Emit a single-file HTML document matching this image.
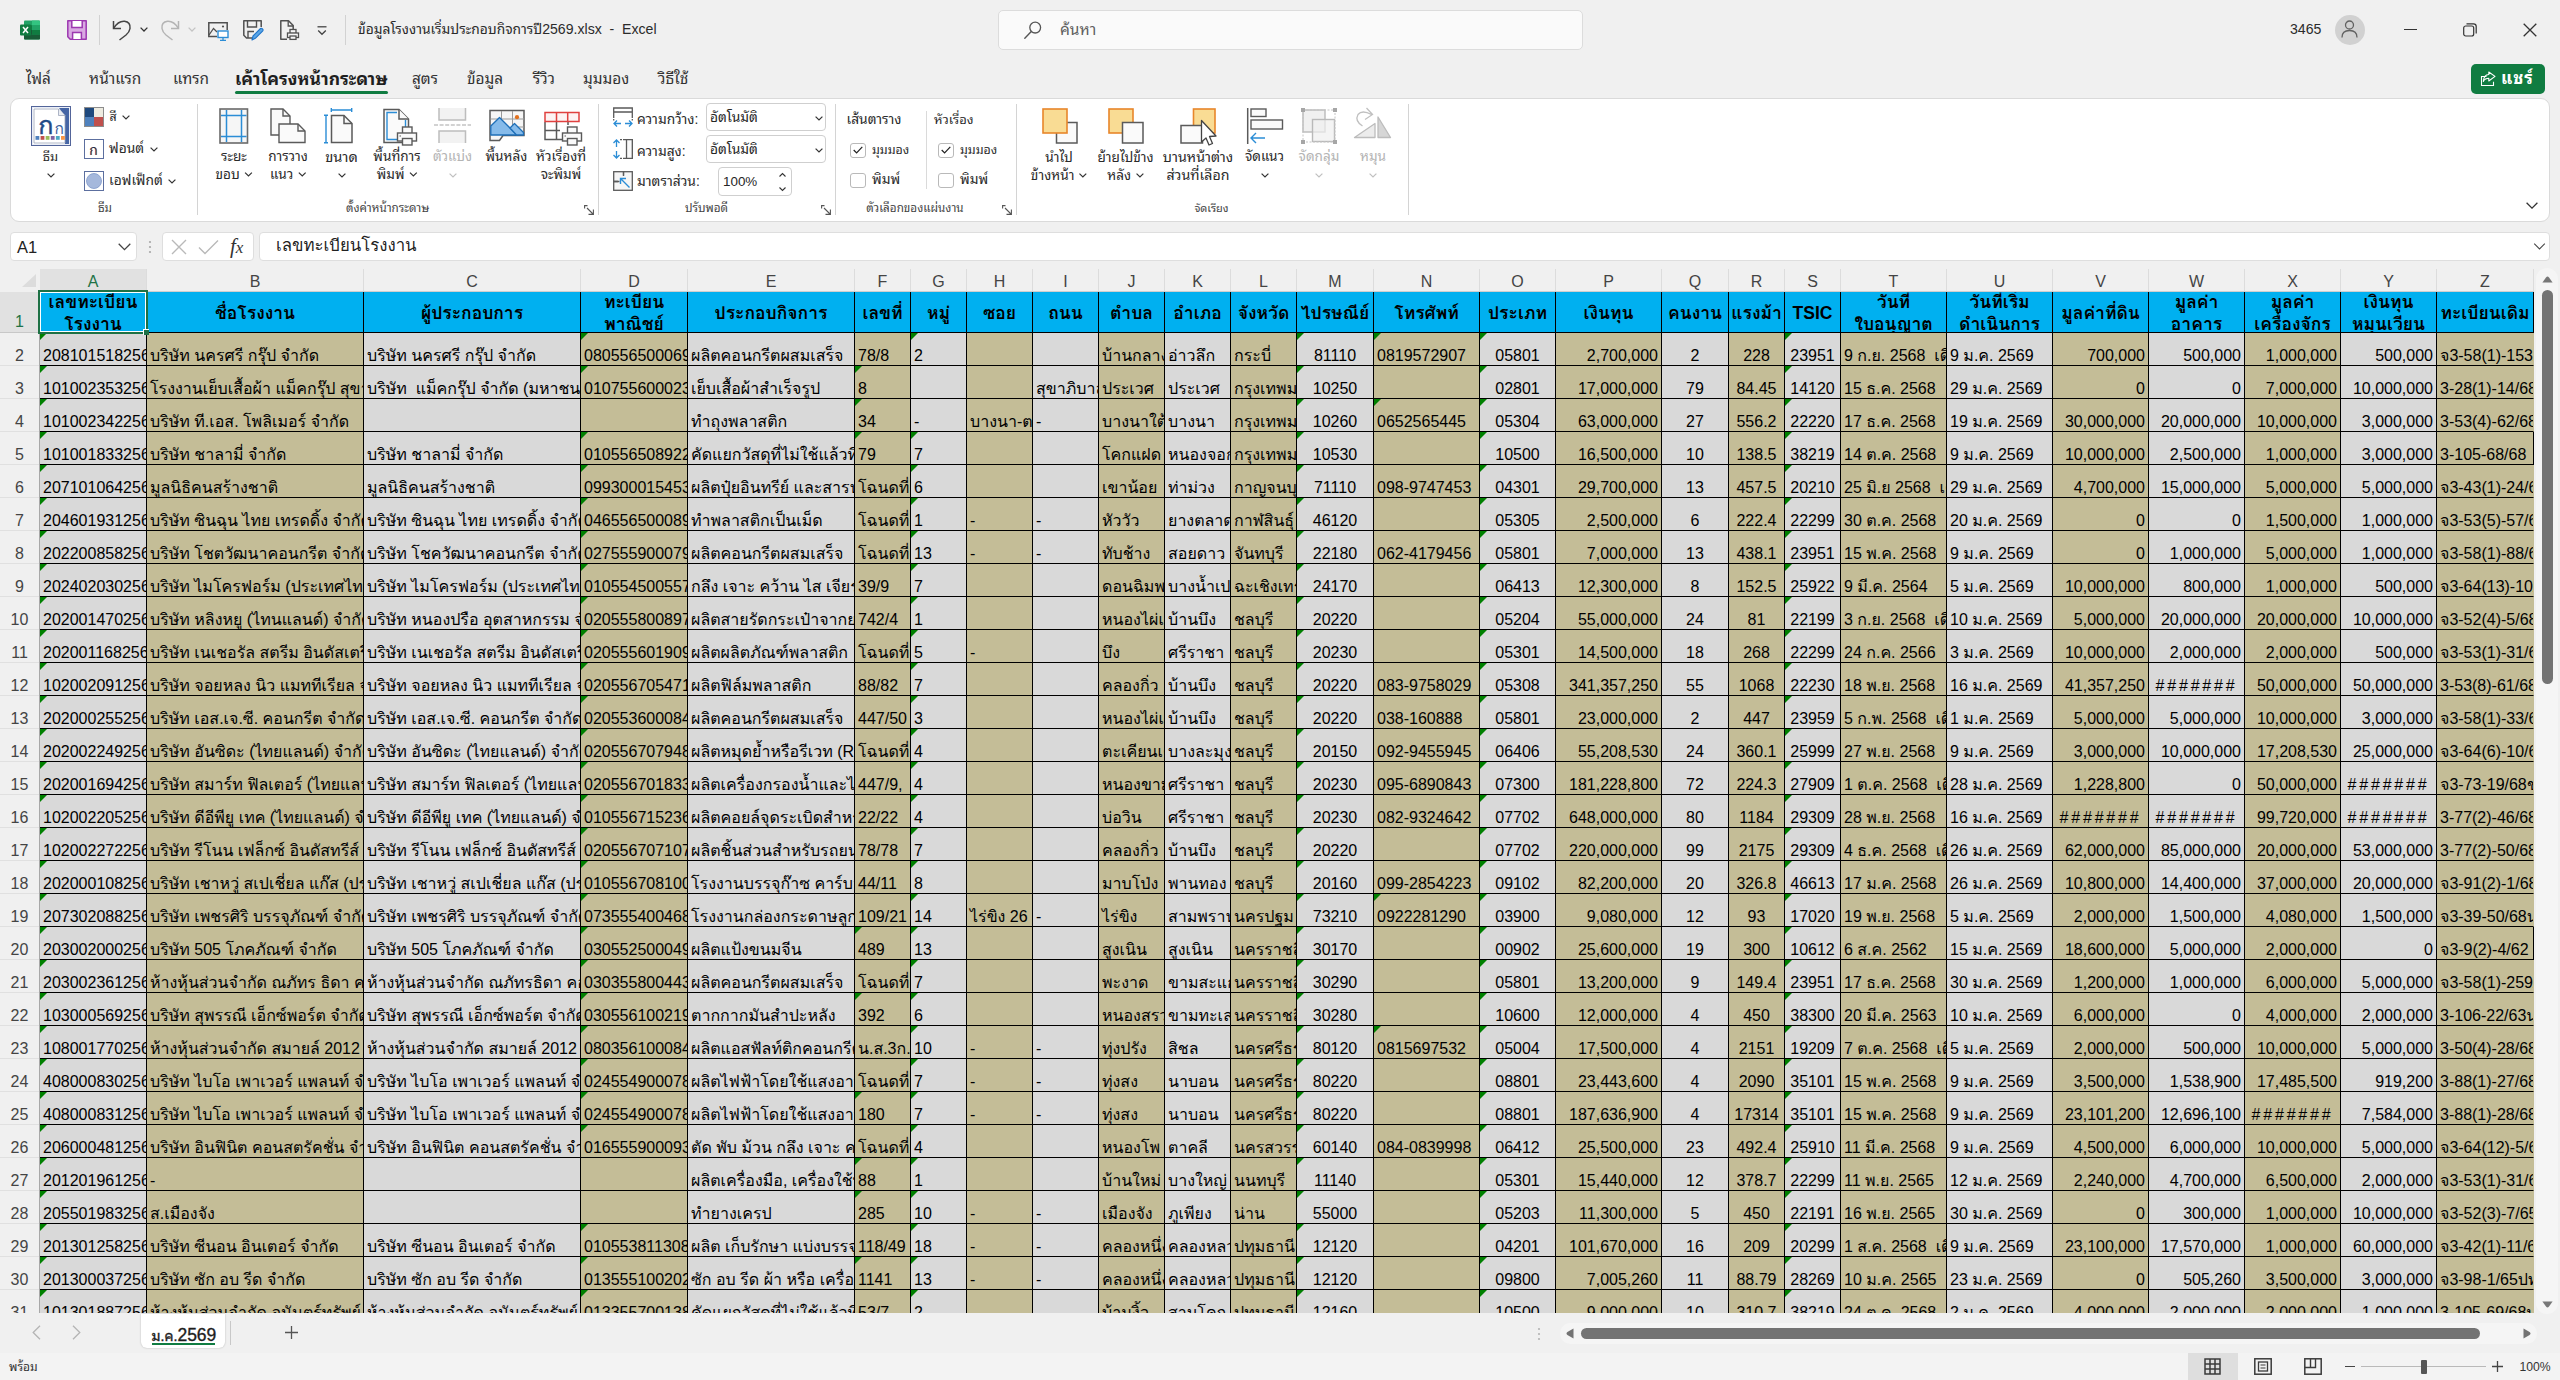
<!DOCTYPE html>
<html lang="th">
<head>
<meta charset="utf-8">
<title>ข้อมูลโรงงานเริ่มประกอบกิจการปี2569.xlsx - Excel</title>
<style>
html,body{margin:0;padding:0}
body{width:2560px;height:1380px;overflow:hidden;background:#f0f0f0;position:relative;
 font-family:"Liberation Sans","Noto Sans Thai Looped","Leelawadee UI","Noto Sans Thai","Sarabun","Loma","Garuda","Tahoma","DejaVu Sans",sans-serif;color:#262626;font-size:15px}
.cf{font-family:"Liberation Sans","Loma","Tahoma","Garuda","Noto Sans Thai Looped","Noto Sans Thai","Sarabun","DejaVu Sans",sans-serif}
.abs{position:absolute}
svg{position:absolute;overflow:visible}
.tx{position:absolute;white-space:nowrap;line-height:20px}
/* ---------- title bar ---------- */
#title{left:358px;top:19px;font-size:13.8px;color:#2b2b2b}
#title b{font-weight:normal;font-size:14.1px}
#search{left:998px;top:10px;width:583px;height:38px;background:#fafafa;border:1px solid #dcdcdc;border-radius:5px}
#search .tx{left:61px;top:9px;font-size:15.5px;color:#5f5f5f}
.vsep{position:absolute;width:1px;background:#d2d2d2}
/* ---------- tabs ---------- */
.tab{position:absolute;top:67px;margin-left:1px;font-size:15.4px;line-height:24px;white-space:nowrap;color:#333}
.tab.act{font-weight:bold;color:#1f1f1f;font-size:17.5px;margin-left:0;top:66.5px}
#share{left:2471px;top:64px;width:74px;height:30px;background:#107c41;border-radius:5px}
#share .tx{left:30px;top:5px;color:#fff;font-weight:bold;font-size:17px;letter-spacing:1px}
/* ---------- ribbon ---------- */
#ribbon{left:10px;top:98px;width:2540px;height:124px;background:#fff;border:1px solid #dadada;border-radius:9px;box-sizing:border-box}
.rl{position:absolute;white-space:nowrap;font-size:13.6px;line-height:18px;color:#2b2b2b;text-align:center;transform:translateX(-50%)}
.rl.dis{color:#b4b4b4}
.rs{position:absolute;white-space:nowrap;font-size:13.8px;line-height:18px;color:#2b2b2b}
.gl{position:absolute;top:199px;white-space:nowrap;font-size:11.7px;line-height:18px;color:#444;transform:translateX(-50%)}
.gsep{position:absolute;top:104px;width:1px;height:111px;background:#d4d4d4}
.combo{position:absolute;height:28px;border:1px solid #cfcfcf;border-radius:4px;background:#fff;box-sizing:border-box}
.combo .tx{left:3px;top:5px;font-size:13.8px;line-height:18px}
.rl svg.ic{position:static;display:inline-block;vertical-align:2px;margin-left:1px}
.cb{position:absolute;width:15.5px;height:15.5px;border:1px solid #b9b9b9;border-radius:3px;box-sizing:border-box;background:#fff}
/* ---------- formula bar ---------- */
.fbox{position:absolute;top:232px;height:29px;background:#fff;border:1px solid #dedede;border-radius:4px;box-sizing:border-box}
/* ---------- grid ---------- */
#corner{left:0;top:269px;width:39px;height:22px}
#colhdr{position:absolute;left:40px;top:269px;width:2494px;height:22px;overflow:hidden;border-bottom:1px solid #cfcfcf;font-size:16px;color:#444}
#colhdr div{position:absolute;top:0;height:22px;line-height:26px;text-align:center;box-sizing:border-box;border-right:1px solid #dcdcdc}
#colhdr div.sel{background:#e1e1e1;color:#217346}
#rowhdr{position:absolute;left:0;top:292px;width:39px;height:1021px;overflow:hidden;font-size:16px;color:#444;border-right:1px solid #a8a8a8}
#rowhdr div{position:absolute;left:0;width:39px;height:33px;line-height:45px;text-align:center;box-sizing:border-box;border-bottom:1px solid #e0e0e0}
#rowhdr div.sel{background:#e1e1e1;color:#217346;border-bottom-color:#c8c8c8}
#grid{position:absolute;left:40px;top:292px;width:2494px;height:1021px;overflow:hidden;font-size:16px;color:#000;white-space:nowrap;background:#d9d9d9}
#grid .r,#grid .hr{display:flex;height:33px;width:2600px}
#grid .hr{height:41px}
#grid .r>div{flex:none;box-sizing:border-box;height:33px;line-height:45px;padding:0 3px;border-right:1px solid #000;border-bottom:1px solid #000;overflow:hidden;position:relative;white-space:pre}
#grid .hr>div{flex:none;box-sizing:border-box;height:41px;border-right:1px solid #000;border-bottom:1px solid #000;overflow:hidden;background:#00b0f0;font-weight:bold;text-align:center;display:flex;align-items:center;justify-content:center;line-height:21.5px;padding-top:3px;font-size:17.5px}
#grid .g{background:#d9d9d9}
#grid .t{background:#c4bd97}
#grid .ac{text-align:center}
#grid .ar{text-align:right}
#grid .r>.nb{border-right-color:transparent}
#grid .hs{letter-spacing:2.8px;padding-left:5px}
#grid .e::before{content:"";position:absolute;left:0;top:0;border-top:7px solid #008000;border-right:7px solid transparent}
#selbox{left:38px;top:290px;width:110px;height:44px;border:2px solid #1e7145;box-sizing:border-box;box-shadow:inset 0 0 0 1px #fff}
#selhandle{left:143px;top:329px;width:5px;height:5px;background:#1e7145;border-left:1px solid #fff;border-top:1px solid #fff}
/* ---------- bottom ---------- */
#sheettab{left:141px;top:1314px;width:84px;height:34px;background:#fff;border-radius:0 0 6px 6px;box-shadow:0 0 2px rgba(0,0,0,.25)}
#status{left:0;top:1353px;width:2560px;height:27px;background:#f3f3f3}
</style>
</head>
<body>
<!-- ======= TITLE BAR ======= -->
<!-- Excel logo -->
<svg style="left:20px;top:20px" width="20" height="20" viewBox="0 0 20 20"><path d="M5 0.5H19Q20 0.5 20 1.5V18.5Q20 19.5 19 19.5H5Q4 19.5 4 18.5V1.5Q4 0.5 5 0.5Z" fill="#21a366"/><path d="M12 0.5H19Q20 0.5 20 1.5V5.2H12Z" fill="#33c481"/><path d="M4 5.2H12V10H4Z" fill="#107c41"/><path d="M12 5.2H20V10H12Z" fill="#21a366"/><path d="M4 10H12V14.8H4Z" fill="#185c37"/><path d="M12 10H20V14.8H12Z" fill="#107c41"/><path d="M4 14.8H20V18.5Q20 19.5 19 19.5H5Q4 19.5 4 18.5Z" fill="#185c37"/><rect x="0" y="4.5" width="11" height="11" rx="1" fill="#107c41"/><path d="M3 7L8 13M8 7L3 13" stroke="#fff" stroke-width="1.5"/></svg>
<!-- Save (purple) -->
<svg style="left:67px;top:20px" width="20" height="20" viewBox="0 0 20 20"><path d="M0.8 0.8H19.2V19.2H3.2L0.8 16.8Z" fill="#d9a9e2" stroke="#9c37b0" stroke-width="1.5" stroke-linejoin="round"/><path d="M4.8 1V7.6H15.2V1" fill="#fff" stroke="#9c37b0" stroke-width="1.5"/><path d="M5.6 19V12.4H14.4V19" fill="#fff" stroke="#9c37b0" stroke-width="1.5"/></svg>
<div class="vsep" style="left:99px;top:15px;height:30px"></div>
<!-- Undo -->
<svg style="left:112px;top:19px" width="20" height="22" viewBox="0 0 20 22"><path d="M1.5 2V9.5H9" fill="none" stroke="#444" stroke-width="1.5"/><path d="M1.8 9.2Q6 1.8 12.5 2.2Q18.8 3 18 9.5Q17.5 13 14 16L7.5 21" fill="none" stroke="#444" stroke-width="1.5"/></svg>
<svg style="left:140px;top:27px" width="8" height="5" viewBox="0 0 8 5"><path d="M0.6 0.6L4 4L7.4 0.6" fill="none" stroke="#333" stroke-width="1.3"/></svg>
<!-- Redo (disabled) -->
<svg style="left:160px;top:19px" width="20" height="22" viewBox="0 0 20 22"><path d="M18.5 2V9.5H11" fill="none" stroke="#b4b4b4" stroke-width="1.5"/><path d="M18.2 9.2Q14 1.8 7.5 2.2Q1.2 3 2 9.5Q2.5 13 6 16L12.5 21" fill="none" stroke="#b4b4b4" stroke-width="1.5"/></svg>
<svg style="left:188px;top:27px" width="8" height="5" viewBox="0 0 8 5"><path d="M0.6 0.6L4 4L7.4 0.6" fill="none" stroke="#c4c4c4" stroke-width="1.3"/></svg>
<!-- picture / screen -->
<svg style="left:208px;top:22px" width="21" height="19" viewBox="0 0 21 19"><path d="M9 14.5H0.8V0.8H19.2V8" fill="none" stroke="#505050" stroke-width="1.5"/><path d="M1 13L5.5 6.5L9 10" fill="none" stroke="#505050" stroke-width="1.3"/><circle cx="15" cy="4.5" r="1.1" fill="#505050"/><rect x="10" y="9" width="10" height="6.5" fill="#fff" stroke="#2b8dd6" stroke-width="1.4"/><path d="M15 15.5V18M12 18.3H18" stroke="#2b8dd6" stroke-width="1.3"/></svg>
<!-- save + pencil -->
<svg style="left:243px;top:20px" width="21" height="21" viewBox="0 0 21 21"><path d="M10 18H3.5L0.8 15.3V0.8H18.2V7" fill="none" stroke="#505050" stroke-width="1.5" stroke-linejoin="round"/><path d="M4.5 1V7H13.5V1" fill="none" stroke="#505050" stroke-width="1.4"/><path d="M5 18V11.5H11" fill="none" stroke="#505050" stroke-width="1.4"/><path d="M9 20L10 16L17.5 8.5Q18.5 7.8 19.5 8.8Q20.5 9.8 19.8 10.8L12.3 18.3Z" fill="#5aa5e6" stroke="#1f74c9" stroke-width="1.1" stroke-linejoin="round"/></svg>
<!-- print preview -->
<svg style="left:280px;top:20px" width="19" height="20" viewBox="0 0 19 20"><path d="M7 19.2H0.8V0.8H8.5L13.2 5.5V9" fill="none" stroke="#505050" stroke-width="1.5" stroke-linejoin="round"/><path d="M8.2 1V6H13" fill="none" stroke="#505050" stroke-width="1.3"/><g fill="#f6f6f6" stroke="#505050" stroke-width="1.3"><rect x="10" y="9.5" width="6" height="4"/><rect x="7.5" y="13" width="11" height="4.5"/><rect x="10" y="16" width="6" height="3.4"/></g></svg>
<!-- customize -->
<svg style="left:317px;top:26px" width="10" height="10" viewBox="0 0 10 10"><path d="M0.5 0.8H9.5" stroke="#444" stroke-width="1.3"/><path d="M1.2 4.5L5 8.3L8.8 4.5" fill="none" stroke="#444" stroke-width="1.3"/></svg>
<div class="vsep" style="left:345px;top:15px;height:30px"></div>

<div class="tx" id="title">ข้อมูลโรงงานเริ่มประกอบกิจการปี<b>2569.xlsx&nbsp; -&nbsp; Excel</b></div>
<div class="abs" id="search"><div class="tx">ค้นหา</div>
<svg style="left:24px;top:9px" width="20" height="20" viewBox="0 0 20 20"><circle cx="12.2" cy="7.6" r="5.4" fill="none" stroke="#555" stroke-width="1.3"/><path d="M8.3 11.6 L1.8 18.2" stroke="#555" stroke-width="1.4" stroke-linecap="round"/></svg>
</div>
<div class="tx" style="left:2290px;top:19px;font-size:14.1px;color:#2b2b2b">3465</div>
<div class="abs" style="left:2334.5px;top:14.5px;width:30px;height:30px;border-radius:50%;background:#d1d1d1"></div>
<svg style="left:2341px;top:20px" width="17" height="18" viewBox="0 0 17 18"><circle cx="8.5" cy="5" r="4" fill="none" stroke="#616161" stroke-width="1.3"/><path d="M1 17.5Q1 10.5 8.5 10.5Q16 10.5 16 17.5" fill="none" stroke="#616161" stroke-width="1.3"/></svg>
<div class="abs" style="left:2404px;top:29px;width:13px;height:1.3px;background:#333"></div>
<svg style="left:2463px;top:23px" width="14" height="14" viewBox="0 0 14 14"><rect x="0.7" y="3" width="10" height="10" rx="2" fill="none" stroke="#333" stroke-width="1.2"/><path d="M3.5 0.8H10.5Q13.2 0.8 13.2 3.5V10.5" fill="none" stroke="#333" stroke-width="1.2"/></svg>
<svg style="left:2523px;top:23px" width="14" height="14" viewBox="0 0 14 14"><path d="M0.7 0.7L13.3 13.3M13.3 0.7L0.7 13.3" stroke="#333" stroke-width="1.3"/></svg>

<!-- ======= TABS ======= -->
<div class="tab" style="left:25px">ไฟล์</div>
<div class="tab" style="left:88px">หน้าแรก</div>
<div class="tab" style="left:172px">แทรก</div>
<div class="tab act" style="left:235px">เค้าโครงหน้ากระดาษ</div>
<div class="abs" style="left:235px;top:91px;width:153px;height:3px;background:#107c41;border-radius:2px"></div>
<div class="tab" style="left:411px">สูตร</div>
<div class="tab" style="left:466px">ข้อมูล</div>
<div class="tab" style="left:532px">รีวิว</div>
<div class="tab" style="left:582px">มุมมอง</div>
<div class="tab" style="left:657px">วิธีใช้</div>
<div class="abs" id="share"><div class="tx">แชร์</div>
<svg style="left:9px;top:7px" width="17" height="16" viewBox="0 0 17 16"><path d="M6.5 5.5H1.5V14.5H13.5V10.8" fill="none" stroke="#fff" stroke-width="1.1"/><path d="M8.8 1L15 5.4L8.8 10V7.3Q5 7.3 3.3 10.4Q3.8 3.8 8.8 3.5Z" fill="none" stroke="#fff" stroke-width="1.1" stroke-linejoin="round"/></svg>
</div>
<!-- ======= RIBBON ======= -->
<div class="abs" id="ribbon"></div>
<!-- === Themes group === -->
<div class="abs" style="left:31px;top:106px;width:40px;height:40px;box-sizing:border-box;border:1px solid #53659a;background:#eaeef7"></div>
<svg style="left:33px;top:108px" width="36" height="36" viewBox="0 0 36 36"><rect x="0" y="0" width="36" height="36" fill="#fff"/><path d="M26 0H36V36H32V8Z" fill="#4565a5"/><path d="M1 1H25.5L32 7.5V35H1Z" fill="#fff" stroke="#9aa3b8" stroke-width="0.8"/><path d="M25.5 1V7.5H32" fill="#e9ecf2" stroke="#9aa3b8" stroke-width="0.8"/><rect x="2.5" y="28" width="3.8" height="3.8" fill="#4f81bd"/><rect x="7.6" y="28" width="3.8" height="3.8" fill="#c0504d"/><rect x="12.7" y="28" width="3.8" height="3.8" fill="#9bbb59"/><rect x="17.8" y="28" width="3.8" height="3.8" fill="#8064a2"/><rect x="22.9" y="28" width="3.8" height="3.8" fill="#4bacc6"/><rect x="28" y="28" width="3.8" height="3.8" fill="#f79646"/><text x="5.2" y="25.6" font-size="25" font-family="Liberation Sans,Loma,sans-serif" fill="#1f4b87" stroke="#1f4b87" stroke-width="0.5">ก</text><text x="21.6" y="25.6" font-size="15.5" font-family="Liberation Sans,Loma,sans-serif" fill="#3a62a0">ก</text></svg>
<div class="rl" style="left:50.5px;top:148px;font-size:12.8px">ธีม</div>
<svg class="car" style="left:47px;top:173px" width="8" height="5" viewBox="0 0 8 5"><path d="M0.6 0.6L4 4L7.4 0.6" fill="none" stroke="#333" stroke-width="1.2"/></svg>
<svg style="left:84px;top:107px" width="20" height="20" viewBox="0 0 20 20"><rect x="0.5" y="0.5" width="19" height="19" fill="#eeece1" stroke="#8c8c8c"/><rect x="1" y="1" width="9" height="9" fill="#1f497d"/><rect x="1" y="10" width="9" height="9" fill="#4f81bd"/><rect x="10" y="10" width="9" height="9" fill="#c0504d"/></svg>
<div class="rs" style="left:109.4px;top:108px;font-size:12.5px">สี</div>
<svg class="car" style="left:122px;top:115px" width="8" height="5" viewBox="0 0 8 5"><path d="M0.6 0.6L4 4L7.4 0.6" fill="none" stroke="#333" stroke-width="1.2"/></svg>
<svg style="left:84px;top:139px" width="20" height="20" viewBox="0 0 20 20"><rect x="0.5" y="0.5" width="19" height="19" fill="#fff" stroke="#5c6f9f"/><text x="5.6" y="16" font-size="14" font-family="Liberation Sans,Loma,sans-serif" fill="#e8902e">ก</text><text x="5" y="15.6" font-size="14" font-family="Liberation Sans,Loma,sans-serif" fill="#1c2f5e">ก</text></svg>
<div class="rs" style="left:109px;top:140px">ฟอนต์</div>
<svg class="car" style="left:150px;top:147px" width="8" height="5" viewBox="0 0 8 5"><path d="M0.6 0.6L4 4L7.4 0.6" fill="none" stroke="#333" stroke-width="1.2"/></svg>
<svg style="left:84px;top:171px" width="20" height="20" viewBox="0 0 20 20"><rect x="0.5" y="0.5" width="19" height="19" fill="#fff" stroke="#5c6f9f"/><circle cx="10" cy="10" r="7.5" fill="#a5b8dc" stroke="#7f98c9" stroke-width="0.8"/></svg>
<div class="rs" style="left:109px;top:172px">เอฟเฟ็กต์</div>
<svg class="car" style="left:168px;top:179px" width="8" height="5" viewBox="0 0 8 5"><path d="M0.6 0.6L4 4L7.4 0.6" fill="none" stroke="#333" stroke-width="1.2"/></svg>
<div class="gl" style="left:105px">ธีม</div>
<div class="gsep" style="left:197px"></div>
<!-- === Page Setup group === -->
<svg style="left:219px;top:108px" width="30" height="36" viewBox="0 0 30 36"><rect x="1" y="1" width="27.5" height="34" fill="#f6f6f6" stroke="#6a6a6a" stroke-width="1.6"/><path d="M7.5 2V34M22.5 2V34M2 7.5H27.5M2 28.5H27.5" stroke="#2b8dd6" stroke-width="1.5" fill="none"/></svg>
<div class="rl" style="left:234px;top:148px">ระยะ<br>ขอบ <svg class="ic" width="8" height="5" viewBox="0 0 8 5"><path d="M0.6 0.6L4 4L7.4 0.6" fill="none" stroke="#333" stroke-width="1.2"/></svg></div>
<svg style="left:270px;top:108px" width="36" height="36" viewBox="0 0 36 36"><path d="M1 1H13L20 8V27H1Z" fill="#fafafa" stroke="#5a5a5a" stroke-width="1.4"/><path d="M13 1V8H20" fill="none" stroke="#5a5a5a" stroke-width="1.4"/><path d="M9 16H28L35 23V34.5H9Z" fill="#fafafa" stroke="#5a5a5a" stroke-width="1.4"/><path d="M28 16V23H35" fill="none" stroke="#5a5a5a" stroke-width="1.4"/></svg>
<div class="rl" style="left:288px;top:148px">การวาง<br>แนว <svg class="ic" width="8" height="5" viewBox="0 0 8 5"><path d="M0.6 0.6L4 4L7.4 0.6" fill="none" stroke="#333" stroke-width="1.2"/></svg></div>
<svg style="left:324px;top:108px" width="30" height="36" viewBox="0 0 30 36"><path d="M7.5 7.5H20L28 15.5V34.5H7.5Z" fill="#fafafa" stroke="#5a5a5a" stroke-width="1.5"/><path d="M20 7.5V15.5H28" fill="none" stroke="#5a5a5a" stroke-width="1.5"/><path d="M2 7V35M0 7.3H4M0 34.7H4M7 2H28M7.3 0V4M27.7 0V4" stroke="#2b8dd6" stroke-width="1.4" fill="none"/></svg>
<div class="rl" style="left:341.5px;top:148px;font-size:14.6px">ขนาด</div>
<svg class="car" style="left:338px;top:173px" width="8" height="5" viewBox="0 0 8 5"><path d="M0.6 0.6L4 4L7.4 0.6" fill="none" stroke="#333" stroke-width="1.2"/></svg>
<svg style="left:383px;top:108px" width="36" height="38" viewBox="0 0 36 38"><path d="M1 1.5H16L25.5 11V34.5H1Z" fill="#fafafa" stroke="#5a5a5a" stroke-width="1.5"/><path d="M16 1.5V11H25.5" fill="#fafafa" stroke="#5a5a5a" stroke-width="1.5"/><path d="M14 4.5H4V31.5H14M22.5 12V20" fill="none" stroke="#2b8dd6" stroke-width="1.4"/><g fill="#fafafa" stroke="#5a5a5a" stroke-width="1.4"><rect x="19.5" y="19" width="9.5" height="7"/><rect x="14.5" y="25" width="19" height="8"/><rect x="19.5" y="30.5" width="9.5" height="6.5"/></g><path d="M16.5 28H18" stroke="#5a5a5a" stroke-width="1"/></svg>
<div class="rl" style="left:397px;top:148px">พื้นที่การ<br>พิมพ์ <svg class="ic" width="8" height="5" viewBox="0 0 8 5"><path d="M0.6 0.6L4 4L7.4 0.6" fill="none" stroke="#333" stroke-width="1.2"/></svg></div>
<svg style="left:434px;top:108px" width="37" height="36" viewBox="0 0 37 36"><path d="M5 0V12H31.5V0" fill="#f2f2f2" stroke="#bdbdbd" stroke-width="1.5"/><path d="M5 35V23H31.5V35" fill="#f2f2f2" stroke="#bdbdbd" stroke-width="1.5"/><path d="M0 17H37" stroke="#c4c4c4" stroke-width="1.4" stroke-dasharray="4 1.6"/></svg>
<div class="rl dis" style="left:452.5px;top:148px">ตัวแบ่ง</div>
<svg class="car" style="left:449px;top:173px" width="8" height="5" viewBox="0 0 8 5"><path d="M0.6 0.6L4 4L7.4 0.6" fill="none" stroke="#c0c0c0" stroke-width="1.2"/></svg>
<svg style="left:489px;top:109px" width="36" height="33" viewBox="0 0 36 33"><path d="M1 1.5H35V26.5H14L10.5 31.5H1Z" fill="#f6f6f6" stroke="#5a5a5a" stroke-width="1.5"/><path d="M12.5 2V10M23.5 2V26M1.5 10H35M24 18H35" stroke="#9a9a9a" stroke-width="1" fill="none"/><path d="M1.8 17L10.5 8.5L28 26H1.8Z" fill="#86bbea" stroke="#1e6fb8" stroke-width="1.3" stroke-linejoin="round"/><path d="M21 19L25.5 14.5L34.5 23.5V26H27.5Z" fill="#86bbea" stroke="#1e6fb8" stroke-width="1.3" stroke-linejoin="round"/><circle cx="28" cy="8.2" r="2.1" fill="#e2711d"/></svg>
<div class="rl" style="left:506.5px;top:148px">พื้นหลัง</div>
<svg style="left:544px;top:111px" width="40" height="36" viewBox="0 0 40 36"><path d="M1 11V28.5H18M12.5 11V28.5M1 19.5H16M24 11V14" fill="none" stroke="#5a5a5a" stroke-width="1.5"/><path d="M1 1.5H35V10.5H1ZM12.5 1.5V10.5M23.7 1.5V10.5" fill="#fdf3f3" stroke="#e0403f" stroke-width="1.5"/><g fill="#fafafa" stroke="#5a5a5a" stroke-width="1.4"><rect x="23.5" y="16" width="9.5" height="7"/><rect x="18.5" y="22" width="19" height="8"/><rect x="23.5" y="27.5" width="9.5" height="6.5"/></g><path d="M20.5 25H22" stroke="#5a5a5a" stroke-width="1"/></svg>
<div class="rl" style="left:561px;top:148px">หัวเรื่องที่<br>จะพิมพ์</div>
<div class="gl" style="left:387.5px">ตั้งค่าหน้ากระดาษ</div>
<svg class="ln" style="left:584px;top:205px" width="10" height="10" viewBox="0 0 10 10"><path d="M0.6 3.5V0.6H3.5M3 3L9 9M9.4 4.5V9.4H4.5" fill="none" stroke="#555" stroke-width="1.1"/></svg>
<div class="gsep" style="left:598px"></div>
<!-- === Scale to fit === -->
<svg style="left:613px;top:107px" width="20" height="20" viewBox="0 0 20 20"><path d="M0.7 11V1H19.3V11M0.7 5H19.3" fill="none" stroke="#5a5a5a" stroke-width="1.3"/><path d="M0.7 12V14M19.3 12V14" stroke="#5a5a5a" stroke-width="1.3" stroke-dasharray="1.5 1.5"/><path d="M1 16.5H8M12 16.5H19M4 13.5L1 16.5L4 19.5M16 13.5L19 16.5L16 19.5" fill="none" stroke="#2b8dd6" stroke-width="1.3"/></svg>
<div class="rs" style="left:637px;top:110.5px">ความกว้าง:</div>
<div class="combo" style="left:706px;top:103px;width:120px"><div class="tx">อัตโนมัติ</div><svg style="left:108px;top:12px" width="8" height="5" viewBox="0 0 8 5"><path d="M0.6 0.6L4 4L7.4 0.6" fill="none" stroke="#333" stroke-width="1.2"/></svg></div>
<svg style="left:613px;top:139px" width="20" height="20" viewBox="0 0 20 20"><path d="M10 0.7H19.3V19.3H10" fill="none" stroke="#5a5a5a" stroke-width="1.3"/><path d="M13.5 0.7V19.3H19.3V0.7Z" fill="#fafafa" stroke="#5a5a5a" stroke-width="1.3"/><path d="M7 0.7H9M7 19.3H9" stroke="#5a5a5a" stroke-width="1.3"/><path d="M3.5 1V8M3.5 12V19M0.5 4L3.5 1L6.5 4M0.5 16L3.5 19L6.5 16" fill="none" stroke="#2b8dd6" stroke-width="1.3"/></svg>
<div class="rs" style="left:637px;top:142.5px">ความสูง:</div>
<div class="combo" style="left:706px;top:135px;width:120px"><div class="tx">อัตโนมัติ</div><svg style="left:108px;top:12px" width="8" height="5" viewBox="0 0 8 5"><path d="M0.6 0.6L4 4L7.4 0.6" fill="none" stroke="#333" stroke-width="1.2"/></svg></div>
<svg style="left:613px;top:171px" width="20" height="20" viewBox="0 0 20 20"><rect x="0.7" y="0.7" width="18.6" height="18.6" fill="#f6f6f6" stroke="#5a5a5a" stroke-width="1.3"/><path d="M0.7 10.5H5M10.5 0.7V4.5M10.5 10.5" fill="none" stroke="#5a5a5a" stroke-width="1.3"/><path d="M0.7 10.5H6.5M10.5 0.7V5" stroke="#5a5a5a" stroke-width="1.3"/><path d="M16.5 16.5L7.5 7.5M7.5 13V7.5H13" fill="none" stroke="#2b8dd6" stroke-width="1.4"/></svg>
<div class="rs" style="left:637px;top:173px">มาตราส่วน:</div>
<div class="combo" style="left:718px;top:166.5px;width:74px;height:29px"><div class="tx" style="left:4px;font-size:13.4px">100%</div><svg style="left:60px;top:5px" width="7" height="4" viewBox="0 0 7 4"><path d="M0.5 3.5L3.5 0.6L6.5 3.5" fill="none" stroke="#333" stroke-width="1.1"/></svg><svg style="left:60px;top:19px" width="7" height="4" viewBox="0 0 7 4"><path d="M0.5 0.5L3.5 3.4L6.5 0.5" fill="none" stroke="#333" stroke-width="1.1"/></svg></div>
<div class="gl" style="left:706.5px">ปรับพอดี</div>
<svg class="ln" style="left:821px;top:205px" width="10" height="10" viewBox="0 0 10 10"><path d="M0.6 3.5V0.6H3.5M3 3L9 9M9.4 4.5V9.4H4.5" fill="none" stroke="#555" stroke-width="1.1"/></svg>
<div class="gsep" style="left:835px"></div>
<!-- === Sheet options === -->
<div class="rs" style="left:846.5px;top:111px">เส้นตาราง</div>
<div class="cb" style="left:850px;top:142.5px"></div>
<svg style="left:853px;top:146px" width="10" height="8" viewBox="0 0 10 8"><path d="M0.7 4L3.6 7L9.3 0.8" fill="none" stroke="#222" stroke-width="1.2"/></svg>
<div class="rs" style="left:872px;top:141px;font-size:12.4px">มุมมอง</div>
<div class="cb" style="left:850px;top:172.5px"></div>
<div class="rs" style="left:872px;top:171px">พิมพ์</div>
<div class="vsep" style="left:926px;top:111px;height:78px;background:#dadada"></div>
<div class="rs" style="left:934px;top:111px;font-size:13px">หัวเรื่อง</div>
<div class="cb" style="left:938px;top:142.5px"></div>
<svg style="left:941px;top:146px" width="10" height="8" viewBox="0 0 10 8"><path d="M0.7 4L3.6 7L9.3 0.8" fill="none" stroke="#222" stroke-width="1.2"/></svg>
<div class="rs" style="left:960px;top:141px;font-size:12.4px">มุมมอง</div>
<div class="cb" style="left:938px;top:172.5px"></div>
<div class="rs" style="left:960px;top:171px">พิมพ์</div>
<div class="gl" style="left:915px">ตัวเลือกของแผ่นงาน</div>
<svg class="ln" style="left:1002px;top:205px" width="10" height="10" viewBox="0 0 10 10"><path d="M0.6 3.5V0.6H3.5M3 3L9 9M9.4 4.5V9.4H4.5" fill="none" stroke="#555" stroke-width="1.1"/></svg>
<div class="gsep" style="left:1016px"></div>
<!-- === Arrange === -->
<svg style="left:1042px;top:108px" width="36" height="36" viewBox="0 0 36 36"><rect x="14.5" y="14.5" width="20.5" height="20.5" fill="#fafafa" stroke="#5a5a5a" stroke-width="1.5"/><rect x="1" y="1" width="24" height="24" fill="#f9dc94" stroke="#e8862a" stroke-width="1.6"/></svg>
<div class="rl" style="left:1059px;top:149px">นำไป<br>ข้างหน้า <svg class="ic" width="8" height="5" viewBox="0 0 8 5"><path d="M0.6 0.6L4 4L7.4 0.6" fill="none" stroke="#333" stroke-width="1.2"/></svg></div>
<svg style="left:1108px;top:108px" width="36" height="36" viewBox="0 0 36 36"><rect x="1" y="1" width="24" height="24" fill="#f9dc94" stroke="#e8862a" stroke-width="1.6"/><rect x="14.5" y="14.5" width="20.5" height="20.5" fill="#fafafa" stroke="#5a5a5a" stroke-width="1.5"/></svg>
<div class="rl" style="left:1125.5px;top:149px">ย้ายไปข้าง<br>หลัง <svg class="ic" width="8" height="5" viewBox="0 0 8 5"><path d="M0.6 0.6L4 4L7.4 0.6" fill="none" stroke="#333" stroke-width="1.2"/></svg></div>
<svg style="left:1180px;top:108px" width="38" height="38" viewBox="0 0 38 38"><rect x="13.5" y="1" width="21.5" height="24" fill="#f9dc94" stroke="#e8862a" stroke-width="1.6"/><rect x="1" y="17.5" width="21.5" height="17.5" fill="#fafafa" stroke="#5a5a5a" stroke-width="1.5"/><path d="M21.5 12.5V34L26 30L29 37L32.5 35.5L29.5 28.5L36 28Z" fill="#fff" stroke="#444" stroke-width="1.3" stroke-linejoin="round"/></svg>
<div class="rl" style="left:1198px;top:148px;font-size:14.2px">บานหน้าต่าง<br>ส่วนที่เลือก</div>
<svg style="left:1246px;top:108px" width="38" height="36" viewBox="0 0 38 36"><path d="M1.7 0V36" stroke="#5a5a5a" stroke-width="1.5"/><rect x="5" y="1" width="15" height="7.5" fill="#fafafa" stroke="#5a5a5a" stroke-width="1.4"/><rect x="5" y="12" width="31.5" height="9" fill="#fafafa" stroke="#5a5a5a" stroke-width="1.4"/><path d="M5 30H19M10 25L5 30L10 35" fill="none" stroke="#2b8dd6" stroke-width="1.4"/></svg>
<div class="rl" style="left:1264.5px;top:148px">จัดแนว</div>
<svg class="car" style="left:1260.5px;top:173px" width="8" height="5" viewBox="0 0 8 5"><path d="M0.6 0.6L4 4L7.4 0.6" fill="none" stroke="#333" stroke-width="1.2"/></svg>
<svg style="left:1301px;top:108px" width="36" height="36" viewBox="0 0 36 36"><rect x="2" y="2" width="22" height="22" fill="#f0f0f0" stroke="#b9b9b9" stroke-width="1.4"/><rect x="11.5" y="11.5" width="22" height="22" fill="#f0f0f0" fill-opacity="0.7" stroke="#b9b9b9" stroke-width="1.4"/><path d="M2 2H34V34H2Z" fill="none" stroke="#c4c4c4" stroke-width="1" stroke-dasharray="2 1.5"/><g fill="#a6a6a6"><rect x="0" y="0" width="4" height="4"/><rect x="32" y="0" width="4" height="4"/><rect x="0" y="32" width="4" height="4"/><rect x="32" y="32" width="4" height="4"/></g></svg>
<div class="rl dis" style="left:1319px;top:148px">จัดกลุ่ม</div>
<svg class="car" style="left:1315px;top:173px" width="8" height="5" viewBox="0 0 8 5"><path d="M0.6 0.6L4 4L7.4 0.6" fill="none" stroke="#c0c0c0" stroke-width="1.2"/></svg>
<svg style="left:1353px;top:107px" width="39" height="32" viewBox="0 0 39 32"><path d="M1.5 30.5L22 16.5V30.5Z" fill="#ececec" stroke="#bcbcbc" stroke-width="1.3" stroke-linejoin="round"/><path d="M25 30.5V10L37.5 30.5Z" fill="#d6d6d6" stroke="#bcbcbc" stroke-width="1.3" stroke-linejoin="round"/><path d="M9.5 19Q1.5 14 5 7.5Q9 2.5 18.5 7.5M13.5 1L19.5 7.5L12 12.5" fill="none" stroke="#c0c0c0" stroke-width="1.3"/></svg>
<div class="rl dis" style="left:1373px;top:148px">หมุน</div>
<svg class="car" style="left:1369px;top:173px" width="8" height="5" viewBox="0 0 8 5"><path d="M0.6 0.6L4 4L7.4 0.6" fill="none" stroke="#c0c0c0" stroke-width="1.2"/></svg>
<div class="gl" style="left:1211.5px;font-size:11px">จัดเรียง</div>
<div class="gsep" style="left:1408px"></div>
<svg style="left:2526px;top:202px" width="12" height="7" viewBox="0 0 12 7"><path d="M0.6 0.7L6 6.1L11.4 0.7" fill="none" stroke="#333" stroke-width="1.3"/></svg>

<!-- ======= FORMULA BAR ======= -->
<div class="fbox" style="left:10px;width:127px"><div class="tx" style="left:6px;top:3.5px;font-size:16.5px;color:#222">A1</div>
<svg style="left:107px;top:10px" width="13" height="8" viewBox="0 0 13 8"><path d="M0.7 0.8L6.5 6.6L12.3 0.8" fill="none" stroke="#444" stroke-width="1.3"/></svg></div>
<svg style="left:148px;top:240px" width="4" height="14" viewBox="0 0 4 14"><circle cx="2" cy="2" r="1.1" fill="#a8a8a8"/><circle cx="2" cy="7" r="1.1" fill="#a8a8a8"/><circle cx="2" cy="12" r="1.1" fill="#a8a8a8"/></svg>
<div class="fbox" style="left:162px;width:92px">
<svg style="left:8px;top:6px" width="16" height="16" viewBox="0 0 16 16"><path d="M1 1L15 15M15 1L1 15" stroke="#b9b9b9" stroke-width="1.4"/></svg>
<svg style="left:35px;top:6px" width="21" height="16" viewBox="0 0 21 16"><path d="M1 8.5L7 14.5L20 1.5" fill="none" stroke="#b9b9b9" stroke-width="1.4"/></svg>
<div class="tx" style="left:67px;top:1px;font-family:'Liberation Serif',serif;font-style:italic;font-size:21px;line-height:24px;color:#333">f<span style="font-size:17px">x</span></div>
</div>
<div class="fbox" style="left:259px;width:2291px"><div class="tx cf" style="left:16px;top:3px;font-size:16.8px;color:#222">เลขทะเบียนโรงงาน</div>
<svg style="left:2273px;top:10px" width="13" height="7" viewBox="0 0 15 9"><path d="M0.7 0.8L7.5 7.6L14.3 0.8" fill="none" stroke="#444" stroke-width="1.3"/></svg></div>
<!-- ======= GRID ======= -->
<div class="abs" id="corner"><svg style="left:22px;top:5px" width="14" height="13" viewBox="0 0 14 13"><path d="M14 0V13H0Z" fill="#dcdcdc"/></svg></div>
<div id="colhdr">
<div class="sel" style="left:0px;width:107px">A</div>
<div style="left:107px;width:217px">B</div>
<div style="left:324px;width:217px">C</div>
<div style="left:541px;width:107px">D</div>
<div style="left:648px;width:167px">E</div>
<div style="left:815px;width:56px">F</div>
<div style="left:871px;width:56px">G</div>
<div style="left:927px;width:66px">H</div>
<div style="left:993px;width:66px">I</div>
<div style="left:1059px;width:66px">J</div>
<div style="left:1125px;width:66px">K</div>
<div style="left:1191px;width:66px">L</div>
<div style="left:1257px;width:77px">M</div>
<div style="left:1334px;width:106px">N</div>
<div style="left:1440px;width:76px">O</div>
<div style="left:1516px;width:106px">P</div>
<div style="left:1622px;width:67px">Q</div>
<div style="left:1689px;width:56px">R</div>
<div style="left:1745px;width:56px">S</div>
<div style="left:1801px;width:106px">T</div>
<div style="left:1907px;width:106px">U</div>
<div style="left:2013px;width:96px">V</div>
<div style="left:2109px;width:96px">W</div>
<div style="left:2205px;width:96px">X</div>
<div style="left:2301px;width:96px">Y</div>
<div style="left:2397px;width:97px">Z</div>
</div>
<div id="rowhdr">
<div class="sel" style="top:0;height:41px;line-height:60px">1</div>
<div style="top:41px">2</div>
<div style="top:74px">3</div>
<div style="top:107px">4</div>
<div style="top:140px">5</div>
<div style="top:173px">6</div>
<div style="top:206px">7</div>
<div style="top:239px">8</div>
<div style="top:272px">9</div>
<div style="top:305px">10</div>
<div style="top:338px">11</div>
<div style="top:371px">12</div>
<div style="top:404px">13</div>
<div style="top:437px">14</div>
<div style="top:470px">15</div>
<div style="top:503px">16</div>
<div style="top:536px">17</div>
<div style="top:569px">18</div>
<div style="top:602px">19</div>
<div style="top:635px">20</div>
<div style="top:668px">21</div>
<div style="top:701px">22</div>
<div style="top:734px">23</div>
<div style="top:767px">24</div>
<div style="top:800px">25</div>
<div style="top:833px">26</div>
<div style="top:866px">27</div>
<div style="top:899px">28</div>
<div style="top:932px">29</div>
<div style="top:965px">30</div>
<div style="top:998px">31</div>
</div>
<div id="grid" class="cf">
<div class="hr">
<div class="h2" style="width:107px"><span>เลขทะเบียน<br>โรงงาน</span></div>
<div class="h1" style="width:217px"><span>ชื่อโรงงาน</span></div>
<div class="h1" style="width:217px"><span>ผู้ประกอบการ</span></div>
<div class="h2" style="width:107px"><span>ทะเบียน<br>พาณิชย์</span></div>
<div class="h1" style="width:167px"><span>ประกอบกิจการ</span></div>
<div class="h1" style="width:56px"><span>เลขที่</span></div>
<div class="h1" style="width:56px"><span>หมู่</span></div>
<div class="h1" style="width:66px"><span>ซอย</span></div>
<div class="h1" style="width:66px"><span>ถนน</span></div>
<div class="h1" style="width:66px"><span>ตำบล</span></div>
<div class="h1" style="width:66px"><span>อำเภอ</span></div>
<div class="h1" style="width:66px"><span>จังหวัด</span></div>
<div class="h1" style="width:77px"><span>ไปรษณีย์</span></div>
<div class="h1" style="width:106px"><span>โทรศัพท์</span></div>
<div class="h1" style="width:76px"><span>ประเภท</span></div>
<div class="h1" style="width:106px"><span>เงินทุน</span></div>
<div class="h1" style="width:67px"><span>คนงาน</span></div>
<div class="h1" style="width:56px"><span>แรงม้า</span></div>
<div class="h1" style="width:56px"><span>TSIC</span></div>
<div class="h2" style="width:106px"><span>วันที่<br>ใบอนุญาต</span></div>
<div class="h2" style="width:106px"><span>วันที่เริ่ม<br>ดำเนินการ</span></div>
<div class="h1" style="width:96px"><span>มูลค่าที่ดิน</span></div>
<div class="h2" style="width:96px"><span>มูลค่า<br>อาคาร</span></div>
<div class="h2" style="width:96px"><span>มูลค่า<br>เครื่องจักร</span></div>
<div class="h2" style="width:96px"><span>เงินทุน<br>หมุนเวียน</span></div>
<div class="h1" style="width:97px"><span>ทะเบียนเดิม</span></div>
</div>
<div class="r">
<div class="g e" style="width:107px">208101518256</div>
<div class="t" style="width:217px">บริษัท นครศรี กรุ๊ป จำกัด</div>
<div class="g" style="width:217px">บริษัท นครศรี กรุ๊ป จำกัด</div>
<div class="t e" style="width:107px">080556500069</div>
<div class="g" style="width:167px">ผลิตคอนกรีตผสมเสร็จ</div>
<div class="t" style="width:56px">78/8</div>
<div class="g e" style="width:56px">2</div>
<div class="t" style="width:66px"></div>
<div class="g" style="width:66px"></div>
<div class="t" style="width:66px">บ้านกลาง</div>
<div class="g" style="width:66px">อ่าวลึก</div>
<div class="t" style="width:66px">กระบี่</div>
<div class="g ac e" style="width:77px">81110</div>
<div class="t e" style="width:106px">0819572907</div>
<div class="g ac e" style="width:76px">05801</div>
<div class="t ar" style="width:106px">2,700,000</div>
<div class="g ac" style="width:67px">2</div>
<div class="t ac" style="width:56px">228</div>
<div class="g ac e" style="width:56px">23951</div>
<div class="t" style="width:106px">9 ก.ย. 2568  เดิม</div>
<div class="g" style="width:106px">9 ม.ค. 2569</div>
<div class="t ar" style="width:96px">700,000</div>
<div class="g ar" style="width:96px">500,000</div>
<div class="t ar" style="width:96px">1,000,000</div>
<div class="g ar" style="width:96px">500,000</div>
<div class="t nb" style="width:97px">จ3-58(1)-153/68</div>
</div>
<div class="r">
<div class="g e" style="width:107px">101002353256</div>
<div class="t" style="width:217px">โรงงานเย็บเสื้อผ้า แม็คกรุ๊ป สุขาภิบาล 2</div>
<div class="g" style="width:217px">บริษัท  แม็คกรุ๊ป จำกัด (มหาชน)</div>
<div class="t e" style="width:107px">010755600023</div>
<div class="g" style="width:167px">เย็บเสื้อผ้าสำเร็จรูป</div>
<div class="t e" style="width:56px">8</div>
<div class="g" style="width:56px"></div>
<div class="t" style="width:66px"></div>
<div class="g" style="width:66px">สุขาภิบาล 2</div>
<div class="t" style="width:66px">ประเวศ</div>
<div class="g" style="width:66px">ประเวศ</div>
<div class="t" style="width:66px">กรุงเทพมหานคร</div>
<div class="g ac e" style="width:77px">10250</div>
<div class="t" style="width:106px"></div>
<div class="g ac e" style="width:76px">02801</div>
<div class="t ar" style="width:106px">17,000,000</div>
<div class="g ac" style="width:67px">79</div>
<div class="t ac" style="width:56px">84.45</div>
<div class="g ac e" style="width:56px">14120</div>
<div class="t" style="width:106px">15 ธ.ค. 2568</div>
<div class="g" style="width:106px">29 ม.ค. 2569</div>
<div class="t ar" style="width:96px">0</div>
<div class="g ar" style="width:96px">0</div>
<div class="t ar" style="width:96px">7,000,000</div>
<div class="g ar" style="width:96px">10,000,000</div>
<div class="t nb" style="width:97px">3-28(1)-14/68</div>
</div>
<div class="r">
<div class="g e" style="width:107px">101002342256</div>
<div class="t" style="width:217px">บริษัท ที.เอส. โพลิเมอร์ จำกัด</div>
<div class="g" style="width:217px"></div>
<div class="t" style="width:107px"></div>
<div class="g" style="width:167px">ทำถุงพลาสติก</div>
<div class="t e" style="width:56px">34</div>
<div class="g" style="width:56px">-</div>
<div class="t" style="width:66px">บางนา-ตราด</div>
<div class="g" style="width:66px">-</div>
<div class="t" style="width:66px">บางนาใต้</div>
<div class="g" style="width:66px">บางนา</div>
<div class="t" style="width:66px">กรุงเทพมหานคร</div>
<div class="g ac e" style="width:77px">10260</div>
<div class="t e" style="width:106px">0652565445</div>
<div class="g ac e" style="width:76px">05304</div>
<div class="t ar" style="width:106px">63,000,000</div>
<div class="g ac" style="width:67px">27</div>
<div class="t ac" style="width:56px">556.2</div>
<div class="g ac e" style="width:56px">22220</div>
<div class="t" style="width:106px">17 ธ.ค. 2568</div>
<div class="g" style="width:106px">19 ม.ค. 2569</div>
<div class="t ar" style="width:96px">30,000,000</div>
<div class="g ar" style="width:96px">20,000,000</div>
<div class="t ar" style="width:96px">10,000,000</div>
<div class="g ar" style="width:96px">3,000,000</div>
<div class="t nb" style="width:97px">3-53(4)-62/68</div>
</div>
<div class="r">
<div class="g e" style="width:107px">101001833256</div>
<div class="t" style="width:217px">บริษัท ชาลามี่ จำกัด</div>
<div class="g" style="width:217px">บริษัท ชาลามี่ จำกัด</div>
<div class="t e" style="width:107px">010556508922</div>
<div class="g" style="width:167px">คัดแยกวัสดุที่ไม่ใช้แล้วที่ไม่เป็นของเสียอันตราย</div>
<div class="t e" style="width:56px">79</div>
<div class="g e" style="width:56px">7</div>
<div class="t" style="width:66px"></div>
<div class="g" style="width:66px"></div>
<div class="t" style="width:66px">โคกแฝด</div>
<div class="g" style="width:66px">หนองจอก</div>
<div class="t" style="width:66px">กรุงเทพมหานคร</div>
<div class="g ac e" style="width:77px">10530</div>
<div class="t" style="width:106px"></div>
<div class="g ac e" style="width:76px">10500</div>
<div class="t ar" style="width:106px">16,500,000</div>
<div class="g ac" style="width:67px">10</div>
<div class="t ac" style="width:56px">138.5</div>
<div class="g ac e" style="width:56px">38219</div>
<div class="t" style="width:106px">14 ต.ค. 2568</div>
<div class="g" style="width:106px">9 ม.ค. 2569</div>
<div class="t ar" style="width:96px">10,000,000</div>
<div class="g ar" style="width:96px">2,500,000</div>
<div class="t ar" style="width:96px">1,000,000</div>
<div class="g ar" style="width:96px">3,000,000</div>
<div class="t" style="width:97px">3-105-68/68</div>
</div>
<div class="r">
<div class="g e" style="width:107px">207101064256</div>
<div class="t" style="width:217px">มูลนิธิคนสร้างชาติ</div>
<div class="g" style="width:217px">มูลนิธิคนสร้างชาติ</div>
<div class="t e" style="width:107px">099300015453</div>
<div class="g" style="width:167px">ผลิตปุ๋ยอินทรีย์ และสารปรับปรุงดิน</div>
<div class="t" style="width:56px">โฉนดที่ดิน</div>
<div class="g e" style="width:56px">6</div>
<div class="t" style="width:66px"></div>
<div class="g" style="width:66px"></div>
<div class="t" style="width:66px">เขาน้อย</div>
<div class="g" style="width:66px">ท่าม่วง</div>
<div class="t" style="width:66px">กาญจนบุรี</div>
<div class="g ac e" style="width:77px">71110</div>
<div class="t" style="width:106px">098-9747453</div>
<div class="g ac e" style="width:76px">04301</div>
<div class="t ar" style="width:106px">29,700,000</div>
<div class="g ac" style="width:67px">13</div>
<div class="t ac" style="width:56px">457.5</div>
<div class="g ac e" style="width:56px">20210</div>
<div class="t" style="width:106px">25 มิ.ย 2568  เดิม</div>
<div class="g" style="width:106px">29 ม.ค. 2569</div>
<div class="t ar" style="width:96px">4,700,000</div>
<div class="g ar" style="width:96px">15,000,000</div>
<div class="t ar" style="width:96px">5,000,000</div>
<div class="g ar" style="width:96px">5,000,000</div>
<div class="t nb" style="width:97px">จ3-43(1)-24/68</div>
</div>
<div class="r">
<div class="g e" style="width:107px">204601931256</div>
<div class="t" style="width:217px">บริษัท ซินฉุน ไทย เทรดดิ้ง จำกัด</div>
<div class="g" style="width:217px">บริษัท ซินฉุน ไทย เทรดดิ้ง จำกัด</div>
<div class="t e" style="width:107px">046556500089</div>
<div class="g" style="width:167px">ทำพลาสติกเป็นเม็ด</div>
<div class="t" style="width:56px">โฉนดที่ดิน</div>
<div class="g e" style="width:56px">1</div>
<div class="t" style="width:66px">-</div>
<div class="g" style="width:66px">-</div>
<div class="t" style="width:66px">หัววัว</div>
<div class="g" style="width:66px">ยางตลาด</div>
<div class="t" style="width:66px">กาฬสินธุ์</div>
<div class="g ac e" style="width:77px">46120</div>
<div class="t" style="width:106px"></div>
<div class="g ac e" style="width:76px">05305</div>
<div class="t ar" style="width:106px">2,500,000</div>
<div class="g ac" style="width:67px">6</div>
<div class="t ac" style="width:56px">222.4</div>
<div class="g ac e" style="width:56px">22299</div>
<div class="t" style="width:106px">30 ต.ค. 2568</div>
<div class="g" style="width:106px">20 ม.ค. 2569</div>
<div class="t ar" style="width:96px">0</div>
<div class="g ar" style="width:96px">0</div>
<div class="t ar" style="width:96px">1,500,000</div>
<div class="g ar" style="width:96px">1,000,000</div>
<div class="t nb" style="width:97px">จ3-53(5)-57/68</div>
</div>
<div class="r">
<div class="g e" style="width:107px">202200858256</div>
<div class="t" style="width:217px">บริษัท โชตวัฒนาคอนกรีต จำกัด</div>
<div class="g" style="width:217px">บริษัท โชควัฒนาคอนกรีต จำกัด</div>
<div class="t e" style="width:107px">027555900079</div>
<div class="g" style="width:167px">ผลิตคอนกรีตผสมเสร็จ</div>
<div class="t" style="width:56px">โฉนดที่ดิน</div>
<div class="g e" style="width:56px">13</div>
<div class="t" style="width:66px">-</div>
<div class="g" style="width:66px">-</div>
<div class="t" style="width:66px">ทับช้าง</div>
<div class="g" style="width:66px">สอยดาว</div>
<div class="t" style="width:66px">จันทบุรี</div>
<div class="g ac e" style="width:77px">22180</div>
<div class="t" style="width:106px">062-4179456</div>
<div class="g ac e" style="width:76px">05801</div>
<div class="t ar" style="width:106px">7,000,000</div>
<div class="g ac" style="width:67px">13</div>
<div class="t ac" style="width:56px">438.1</div>
<div class="g ac e" style="width:56px">23951</div>
<div class="t" style="width:106px">15 พ.ค. 2568</div>
<div class="g" style="width:106px">9 ม.ค. 2569</div>
<div class="t ar" style="width:96px">0</div>
<div class="g ar" style="width:96px">1,000,000</div>
<div class="t ar" style="width:96px">5,000,000</div>
<div class="g ar" style="width:96px">1,000,000</div>
<div class="t nb" style="width:97px">จ3-58(1)-88/68</div>
</div>
<div class="r">
<div class="g e" style="width:107px">202402030256</div>
<div class="t" style="width:217px">บริษัท ไมโครฟอร์ม (ประเทศไทย) จำกัด</div>
<div class="g" style="width:217px">บริษัท ไมโครฟอร์ม (ประเทศไทย) จำกัด</div>
<div class="t e" style="width:107px">010554500557</div>
<div class="g" style="width:167px">กลึง เจาะ คว้าน ไส เจียร เชื่อมโลหะ</div>
<div class="t" style="width:56px">39/9</div>
<div class="g e" style="width:56px">7</div>
<div class="t" style="width:66px"></div>
<div class="g" style="width:66px"></div>
<div class="t" style="width:66px">ดอนฉิมพลี</div>
<div class="g" style="width:66px">บางน้ำเปรี้ยว</div>
<div class="t" style="width:66px">ฉะเชิงเทรา</div>
<div class="g ac e" style="width:77px">24170</div>
<div class="t" style="width:106px"></div>
<div class="g ac e" style="width:76px">06413</div>
<div class="t ar" style="width:106px">12,300,000</div>
<div class="g ac" style="width:67px">8</div>
<div class="t ac" style="width:56px">152.5</div>
<div class="g ac e" style="width:56px">25922</div>
<div class="t" style="width:106px">9 มี.ค. 2564</div>
<div class="g" style="width:106px">5 ม.ค. 2569</div>
<div class="t ar" style="width:96px">10,000,000</div>
<div class="g ar" style="width:96px">800,000</div>
<div class="t ar" style="width:96px">1,000,000</div>
<div class="g ar" style="width:96px">500,000</div>
<div class="t nb" style="width:97px">จ3-64(13)-10/64</div>
</div>
<div class="r">
<div class="g e" style="width:107px">202001470256</div>
<div class="t" style="width:217px">บริษัท หลิงหยู (ไทนแลนด์) จำกัด</div>
<div class="g" style="width:217px">บริษัท หนองปรือ อุตสาหกรรม จำกัด</div>
<div class="t e" style="width:107px">020555800897</div>
<div class="g" style="width:167px">ผลิตสายรัดกระเป๋าจากยาง</div>
<div class="t" style="width:56px">742/4</div>
<div class="g e" style="width:56px">1</div>
<div class="t" style="width:66px"></div>
<div class="g" style="width:66px"></div>
<div class="t" style="width:66px">หนองไผ่แก้ว</div>
<div class="g" style="width:66px">บ้านบึง</div>
<div class="t" style="width:66px">ชลบุรี</div>
<div class="g ac e" style="width:77px">20220</div>
<div class="t" style="width:106px"></div>
<div class="g ac e" style="width:76px">05204</div>
<div class="t ar" style="width:106px">55,000,000</div>
<div class="g ac" style="width:67px">24</div>
<div class="t ac" style="width:56px">81</div>
<div class="g ac e" style="width:56px">22199</div>
<div class="t" style="width:106px">3 ก.ย. 2568  เดิม</div>
<div class="g" style="width:106px">10 ม.ค. 2569</div>
<div class="t ar" style="width:96px">5,000,000</div>
<div class="g ar" style="width:96px">20,000,000</div>
<div class="t ar" style="width:96px">20,000,000</div>
<div class="g ar" style="width:96px">10,000,000</div>
<div class="t nb" style="width:97px">จ3-52(4)-5/68</div>
</div>
<div class="r">
<div class="g e" style="width:107px">202001168256</div>
<div class="t" style="width:217px">บริษัท เนเชอรัล สตรีม อินดัสเตรียล จำกัด</div>
<div class="g" style="width:217px">บริษัท เนเชอรัล สตรีม อินดัสเตรียล จำกัด</div>
<div class="t e" style="width:107px">020555601909</div>
<div class="g" style="width:167px">ผลิตผลิตภัณฑ์พลาสติก</div>
<div class="t" style="width:56px">โฉนดที่ดิน</div>
<div class="g e" style="width:56px">5</div>
<div class="t" style="width:66px">-</div>
<div class="g" style="width:66px"></div>
<div class="t" style="width:66px">บึง</div>
<div class="g" style="width:66px">ศรีราชา</div>
<div class="t" style="width:66px">ชลบุรี</div>
<div class="g ac e" style="width:77px">20230</div>
<div class="t" style="width:106px"></div>
<div class="g ac e" style="width:76px">05301</div>
<div class="t ar" style="width:106px">14,500,000</div>
<div class="g ac" style="width:67px">18</div>
<div class="t ac" style="width:56px">268</div>
<div class="g ac e" style="width:56px">22299</div>
<div class="t" style="width:106px">24 ก.ค. 2566</div>
<div class="g" style="width:106px">3 ม.ค. 2569</div>
<div class="t ar" style="width:96px">10,000,000</div>
<div class="g ar" style="width:96px">2,000,000</div>
<div class="t ar" style="width:96px">2,000,000</div>
<div class="g ar" style="width:96px">500,000</div>
<div class="t nb" style="width:97px">จ3-53(1)-31/66</div>
</div>
<div class="r">
<div class="g e" style="width:107px">102002091256</div>
<div class="t" style="width:217px">บริษัท จอยหลง นิว แมททีเรียล จำกัด</div>
<div class="g" style="width:217px">บริษัท จอยหลง นิว แมททีเรียล จำกัด</div>
<div class="t e" style="width:107px">020556705471</div>
<div class="g" style="width:167px">ผลิตฟิล์มพลาสติก</div>
<div class="t" style="width:56px">88/82</div>
<div class="g e" style="width:56px">7</div>
<div class="t" style="width:66px"></div>
<div class="g" style="width:66px"></div>
<div class="t" style="width:66px">คลองกิ่ว</div>
<div class="g" style="width:66px">บ้านบึง</div>
<div class="t" style="width:66px">ชลบุรี</div>
<div class="g ac e" style="width:77px">20220</div>
<div class="t" style="width:106px">083-9758029</div>
<div class="g ac e" style="width:76px">05308</div>
<div class="t ar" style="width:106px">341,357,250</div>
<div class="g ac" style="width:67px">55</div>
<div class="t ac" style="width:56px">1068</div>
<div class="g ac e" style="width:56px">22230</div>
<div class="t" style="width:106px">18 พ.ย. 2568</div>
<div class="g" style="width:106px">16 ม.ค. 2569</div>
<div class="t ar" style="width:96px">41,357,250</div>
<div class="g hs ac" style="width:96px">#######</div>
<div class="t ar" style="width:96px">50,000,000</div>
<div class="g ar" style="width:96px">50,000,000</div>
<div class="t nb" style="width:97px">3-53(8)-61/68</div>
</div>
<div class="r">
<div class="g e" style="width:107px">202000255256</div>
<div class="t" style="width:217px">บริษัท เอส.เจ.ซี. คอนกรีต จำกัด</div>
<div class="g" style="width:217px">บริษัท เอส.เจ.ซี. คอนกรีต จำกัด</div>
<div class="t e" style="width:107px">020553600084</div>
<div class="g" style="width:167px">ผลิตคอนกรีตผสมเสร็จ</div>
<div class="t" style="width:56px">447/50</div>
<div class="g e" style="width:56px">3</div>
<div class="t" style="width:66px"></div>
<div class="g" style="width:66px"></div>
<div class="t" style="width:66px">หนองไผ่แก้ว</div>
<div class="g" style="width:66px">บ้านบึง</div>
<div class="t" style="width:66px">ชลบุรี</div>
<div class="g ac e" style="width:77px">20220</div>
<div class="t" style="width:106px">038-160888</div>
<div class="g ac e" style="width:76px">05801</div>
<div class="t ar" style="width:106px">23,000,000</div>
<div class="g ac" style="width:67px">2</div>
<div class="t ac" style="width:56px">447</div>
<div class="g ac e" style="width:56px">23959</div>
<div class="t" style="width:106px">5 ก.พ. 2568  เดิม</div>
<div class="g" style="width:106px">1 ม.ค. 2569</div>
<div class="t ar" style="width:96px">5,000,000</div>
<div class="g ar" style="width:96px">5,000,000</div>
<div class="t ar" style="width:96px">10,000,000</div>
<div class="g ar" style="width:96px">3,000,000</div>
<div class="t nb" style="width:97px">จ3-58(1)-33/68</div>
</div>
<div class="r">
<div class="g e" style="width:107px">202002249256</div>
<div class="t" style="width:217px">บริษัท อันซิดะ (ไทยแลนด์) จำกัด</div>
<div class="g" style="width:217px">บริษัท อันซิดะ (ไทยแลนด์) จำกัด</div>
<div class="t e" style="width:107px">020556707948</div>
<div class="g" style="width:167px">ผลิตหมุดย้ำหรือรีเวท (Rivet)</div>
<div class="t" style="width:56px">โฉนดที่ดิน</div>
<div class="g e" style="width:56px">4</div>
<div class="t" style="width:66px"></div>
<div class="g" style="width:66px"></div>
<div class="t" style="width:66px">ตะเคียนเตี้ย</div>
<div class="g" style="width:66px">บางละมุง</div>
<div class="t" style="width:66px">ชลบุรี</div>
<div class="g ac e" style="width:77px">20150</div>
<div class="t" style="width:106px">092-9455945</div>
<div class="g ac e" style="width:76px">06406</div>
<div class="t ar" style="width:106px">55,208,530</div>
<div class="g ac" style="width:67px">24</div>
<div class="t ac" style="width:56px">360.1</div>
<div class="g ac e" style="width:56px">25999</div>
<div class="t" style="width:106px">27 พ.ย. 2568</div>
<div class="g" style="width:106px">9 ม.ค. 2569</div>
<div class="t ar" style="width:96px">3,000,000</div>
<div class="g ar" style="width:96px">10,000,000</div>
<div class="t ar" style="width:96px">17,208,530</div>
<div class="g ar" style="width:96px">25,000,000</div>
<div class="t nb" style="width:97px">จ3-64(6)-10/68</div>
</div>
<div class="r">
<div class="g e" style="width:107px">202001694256</div>
<div class="t" style="width:217px">บริษัท สมาร์ท ฟิลเตอร์ (ไทยแลนด์) จำกัด</div>
<div class="g" style="width:217px">บริษัท สมาร์ท ฟิลเตอร์ (ไทยแลนด์) จำกัด</div>
<div class="t e" style="width:107px">020556701833</div>
<div class="g" style="width:167px">ผลิตเครื่องกรองน้ำและไส้กรอง</div>
<div class="t" style="width:56px">447/9, </div>
<div class="g e" style="width:56px">4</div>
<div class="t" style="width:66px"></div>
<div class="g" style="width:66px"></div>
<div class="t" style="width:66px">หนองขาม</div>
<div class="g" style="width:66px">ศรีราชา</div>
<div class="t" style="width:66px">ชลบุรี</div>
<div class="g ac e" style="width:77px">20230</div>
<div class="t" style="width:106px">095-6890843</div>
<div class="g ac e" style="width:76px">07300</div>
<div class="t ar" style="width:106px">181,228,800</div>
<div class="g ac" style="width:67px">72</div>
<div class="t ac" style="width:56px">224.3</div>
<div class="g ac e" style="width:56px">27909</div>
<div class="t" style="width:106px">1 ต.ค. 2568  เดิม</div>
<div class="g" style="width:106px">28 ม.ค. 2569</div>
<div class="t ar" style="width:96px">1,228,800</div>
<div class="g ar" style="width:96px">0</div>
<div class="t ar" style="width:96px">50,000,000</div>
<div class="g hs ac" style="width:96px">#######</div>
<div class="t nb" style="width:97px">จ3-73-19/68ชบ</div>
</div>
<div class="r">
<div class="g e" style="width:107px">102002205256</div>
<div class="t" style="width:217px">บริษัท ดีอีพียู เทค (ไทยแลนด์) จำกัด</div>
<div class="g" style="width:217px">บริษัท ดีอีพียู เทค (ไทยแลนด์) จำกัด</div>
<div class="t e" style="width:107px">010556715236</div>
<div class="g" style="width:167px">ผลิตคอยล์จุดระเบิดสำหรับรถยนต์</div>
<div class="t" style="width:56px">22/22</div>
<div class="g e" style="width:56px">4</div>
<div class="t" style="width:66px"></div>
<div class="g" style="width:66px"></div>
<div class="t" style="width:66px">บ่อวิน</div>
<div class="g" style="width:66px">ศรีราชา</div>
<div class="t" style="width:66px">ชลบุรี</div>
<div class="g ac e" style="width:77px">20230</div>
<div class="t" style="width:106px">082-9324642</div>
<div class="g ac e" style="width:76px">07702</div>
<div class="t ar" style="width:106px">648,000,000</div>
<div class="g ac" style="width:67px">80</div>
<div class="t ac" style="width:56px">1184</div>
<div class="g ac e" style="width:56px">29309</div>
<div class="t" style="width:106px">28 พ.ย. 2568</div>
<div class="g" style="width:106px">16 ม.ค. 2569</div>
<div class="t hs ac" style="width:96px">#######</div>
<div class="g hs ac" style="width:96px">#######</div>
<div class="t ar" style="width:96px">99,720,000</div>
<div class="g hs ac" style="width:96px">#######</div>
<div class="t nb" style="width:97px">3-77(2)-46/68</div>
</div>
<div class="r">
<div class="g e" style="width:107px">102002272256</div>
<div class="t" style="width:217px">บริษัท รีโนน เฟล็กซ์ อินดัสทรีส์ จำกัด</div>
<div class="g" style="width:217px">บริษัท รีโนน เฟล็กซ์ อินดัสทรีส์ จำกัด</div>
<div class="t e" style="width:107px">020556707107</div>
<div class="g" style="width:167px">ผลิตชิ้นส่วนสำหรับรถยนต์</div>
<div class="t" style="width:56px">78/78</div>
<div class="g e" style="width:56px">7</div>
<div class="t" style="width:66px"></div>
<div class="g" style="width:66px"></div>
<div class="t" style="width:66px">คลองกิ่ว</div>
<div class="g" style="width:66px">บ้านบึง</div>
<div class="t" style="width:66px">ชลบุรี</div>
<div class="g ac e" style="width:77px">20220</div>
<div class="t" style="width:106px"></div>
<div class="g ac e" style="width:76px">07702</div>
<div class="t ar" style="width:106px">220,000,000</div>
<div class="g ac" style="width:67px">99</div>
<div class="t ac" style="width:56px">2175</div>
<div class="g ac e" style="width:56px">29309</div>
<div class="t" style="width:106px">4 ธ.ค. 2568  เดิม</div>
<div class="g" style="width:106px">26 ม.ค. 2569</div>
<div class="t ar" style="width:96px">62,000,000</div>
<div class="g ar" style="width:96px">85,000,000</div>
<div class="t ar" style="width:96px">20,000,000</div>
<div class="g ar" style="width:96px">53,000,000</div>
<div class="t nb" style="width:97px">3-77(2)-50/68</div>
</div>
<div class="r">
<div class="g e" style="width:107px">202000108256</div>
<div class="t" style="width:217px">บริษัท เชาหวู่ สเปเชี่ยล แก๊ส (ประเทศไทย) จำกัด</div>
<div class="g" style="width:217px">บริษัท เชาหวู่ สเปเชี่ยล แก๊ส (ประเทศไทย) จำกัด</div>
<div class="t e" style="width:107px">010556708100</div>
<div class="g" style="width:167px">โรงงานบรรจุก๊าซ คาร์บอนไดออกไซด์</div>
<div class="t" style="width:56px">44/11</div>
<div class="g e" style="width:56px">8</div>
<div class="t" style="width:66px"></div>
<div class="g" style="width:66px"></div>
<div class="t" style="width:66px">มาบโป่ง</div>
<div class="g" style="width:66px">พานทอง</div>
<div class="t" style="width:66px">ชลบุรี</div>
<div class="g ac e" style="width:77px">20160</div>
<div class="t" style="width:106px">099-2854223</div>
<div class="g ac e" style="width:76px">09102</div>
<div class="t ar" style="width:106px">82,200,000</div>
<div class="g ac" style="width:67px">20</div>
<div class="t ac" style="width:56px">326.8</div>
<div class="g ac e" style="width:56px">46613</div>
<div class="t" style="width:106px">17 ม.ค. 2568</div>
<div class="g" style="width:106px">26 ม.ค. 2569</div>
<div class="t ar" style="width:96px">10,800,000</div>
<div class="g ar" style="width:96px">14,400,000</div>
<div class="t ar" style="width:96px">37,000,000</div>
<div class="g ar" style="width:96px">20,000,000</div>
<div class="t nb" style="width:97px">จ3-91(2)-1/68</div>
</div>
<div class="r">
<div class="g e" style="width:107px">207302088256</div>
<div class="t" style="width:217px">บริษัท เพชรศิริ บรรจุภัณฑ์ จำกัด</div>
<div class="g" style="width:217px">บริษัท เพชรศิริ บรรจุภัณฑ์ จำกัด</div>
<div class="t e" style="width:107px">073555400468</div>
<div class="g" style="width:167px">โรงงานกล่องกระดาษลูกฟูก</div>
<div class="t" style="width:56px">109/21</div>
<div class="g e" style="width:56px">14</div>
<div class="t" style="width:66px">ไร่ขิง 26</div>
<div class="g" style="width:66px">-</div>
<div class="t" style="width:66px">ไร่ขิง</div>
<div class="g" style="width:66px">สามพราน</div>
<div class="t" style="width:66px">นครปฐม</div>
<div class="g ac e" style="width:77px">73210</div>
<div class="t e" style="width:106px">0922281290</div>
<div class="g ac e" style="width:76px">03900</div>
<div class="t ar" style="width:106px">9,080,000</div>
<div class="g ac" style="width:67px">12</div>
<div class="t ac" style="width:56px">93</div>
<div class="g ac e" style="width:56px">17020</div>
<div class="t" style="width:106px">19 พ.ย. 2568</div>
<div class="g" style="width:106px">5 ม.ค. 2569</div>
<div class="t ar" style="width:96px">2,000,000</div>
<div class="g ar" style="width:96px">1,500,000</div>
<div class="t ar" style="width:96px">4,080,000</div>
<div class="g ar" style="width:96px">1,500,000</div>
<div class="t nb" style="width:97px">จ3-39-50/68นฐ</div>
</div>
<div class="r">
<div class="g e" style="width:107px">203002000256</div>
<div class="t" style="width:217px">บริษัท 505 โภคภัณฑ์ จำกัด</div>
<div class="g" style="width:217px">บริษัท 505 โภคภัณฑ์ จำกัด</div>
<div class="t e" style="width:107px">030552500049</div>
<div class="g" style="width:167px">ผลิตแป้งขนมจีน</div>
<div class="t e" style="width:56px">489</div>
<div class="g e" style="width:56px">13</div>
<div class="t" style="width:66px"></div>
<div class="g" style="width:66px"></div>
<div class="t" style="width:66px">สูงเนิน</div>
<div class="g" style="width:66px">สูงเนิน</div>
<div class="t" style="width:66px">นครราชสีมา</div>
<div class="g ac e" style="width:77px">30170</div>
<div class="t" style="width:106px"></div>
<div class="g ac e" style="width:76px">00902</div>
<div class="t ar" style="width:106px">25,600,000</div>
<div class="g ac" style="width:67px">19</div>
<div class="t ac" style="width:56px">300</div>
<div class="g ac e" style="width:56px">10612</div>
<div class="t" style="width:106px">6 ส.ค. 2562</div>
<div class="g" style="width:106px">15 ม.ค. 2569</div>
<div class="t ar" style="width:96px">18,600,000</div>
<div class="g ar" style="width:96px">5,000,000</div>
<div class="t ar" style="width:96px">2,000,000</div>
<div class="g ar" style="width:96px">0</div>
<div class="t" style="width:97px">จ3-9(2)-4/62</div>
</div>
<div class="r">
<div class="g e" style="width:107px">203002361256</div>
<div class="t" style="width:217px">ห้างหุ้นส่วนจำกัด ณภัทร ธิดา คอนกรีต</div>
<div class="g" style="width:217px">ห้างหุ้นส่วนจำกัด ณภัทรธิดา คอนกรีต</div>
<div class="t e" style="width:107px">030355800443</div>
<div class="g" style="width:167px">ผลิตคอนกรีตผสมเสร็จ</div>
<div class="t" style="width:56px">โฉนดที่ดิน</div>
<div class="g e" style="width:56px">7</div>
<div class="t" style="width:66px"></div>
<div class="g" style="width:66px"></div>
<div class="t" style="width:66px">พะงาด</div>
<div class="g" style="width:66px">ขามสะแกแสง</div>
<div class="t" style="width:66px">นครราชสีมา</div>
<div class="g ac e" style="width:77px">30290</div>
<div class="t" style="width:106px"></div>
<div class="g ac e" style="width:76px">05801</div>
<div class="t ar" style="width:106px">13,200,000</div>
<div class="g ac" style="width:67px">9</div>
<div class="t ac" style="width:56px">149.4</div>
<div class="g ac e" style="width:56px">23951</div>
<div class="t" style="width:106px">17 ธ.ค. 2568</div>
<div class="g" style="width:106px">30 ม.ค. 2569</div>
<div class="t ar" style="width:96px">1,200,000</div>
<div class="g ar" style="width:96px">1,000,000</div>
<div class="t ar" style="width:96px">6,000,000</div>
<div class="g ar" style="width:96px">5,000,000</div>
<div class="t nb" style="width:97px">จ3-58(1)-259/68</div>
</div>
<div class="r">
<div class="g e" style="width:107px">103000569256</div>
<div class="t" style="width:217px">บริษัท สุพรรณี เอ็กซ์พอร์ต จำกัด</div>
<div class="g" style="width:217px">บริษัท สุพรรณี เอ็กซ์พอร์ต จำกัด</div>
<div class="t e" style="width:107px">030556100219</div>
<div class="g" style="width:167px">ตากกากมันสำปะหลัง</div>
<div class="t e" style="width:56px">392</div>
<div class="g e" style="width:56px">6</div>
<div class="t" style="width:66px"></div>
<div class="g" style="width:66px"></div>
<div class="t" style="width:66px">หนองสรวง</div>
<div class="g" style="width:66px">ขามทะเลสอ</div>
<div class="t" style="width:66px">นครราชสีมา</div>
<div class="g ac e" style="width:77px">30280</div>
<div class="t" style="width:106px"></div>
<div class="g ac e" style="width:76px">10600</div>
<div class="t ar" style="width:106px">12,000,000</div>
<div class="g ac" style="width:67px">4</div>
<div class="t ac" style="width:56px">450</div>
<div class="g ac e" style="width:56px">38300</div>
<div class="t" style="width:106px">20 มี.ค. 2563</div>
<div class="g" style="width:106px">10 ม.ค. 2569</div>
<div class="t ar" style="width:96px">6,000,000</div>
<div class="g ar" style="width:96px">0</div>
<div class="t ar" style="width:96px">4,000,000</div>
<div class="g ar" style="width:96px">2,000,000</div>
<div class="t nb" style="width:97px">3-106-22/63นม</div>
</div>
<div class="r">
<div class="g e" style="width:107px">108001770256</div>
<div class="t" style="width:217px">ห้างหุ้นส่วนจำกัด สมายล์ 2012</div>
<div class="g" style="width:217px">ห้างหุ้นส่วนจำกัด สมายล์ 2012</div>
<div class="t e" style="width:107px">080356100084</div>
<div class="g" style="width:167px">ผลิตแอสฟัลท์ติกคอนกรีต</div>
<div class="t" style="width:56px">น.ส.3ก.</div>
<div class="g e" style="width:56px">10</div>
<div class="t" style="width:66px">-</div>
<div class="g" style="width:66px">-</div>
<div class="t" style="width:66px">ทุ่งปรัง</div>
<div class="g" style="width:66px">สิชล</div>
<div class="t" style="width:66px">นครศรีธรรมราช</div>
<div class="g ac e" style="width:77px">80120</div>
<div class="t e" style="width:106px">0815697532</div>
<div class="g ac e" style="width:76px">05004</div>
<div class="t ar" style="width:106px">17,500,000</div>
<div class="g ac" style="width:67px">4</div>
<div class="t ac" style="width:56px">2151</div>
<div class="g ac e" style="width:56px">19209</div>
<div class="t" style="width:106px">7 ต.ค. 2568  เดิม</div>
<div class="g" style="width:106px">5 ม.ค. 2569</div>
<div class="t ar" style="width:96px">2,000,000</div>
<div class="g ar" style="width:96px">500,000</div>
<div class="t ar" style="width:96px">10,000,000</div>
<div class="g ar" style="width:96px">5,000,000</div>
<div class="t nb" style="width:97px">3-50(4)-28/68</div>
</div>
<div class="r">
<div class="g e" style="width:107px">408000830256</div>
<div class="t" style="width:217px">บริษัท ไบโอ เพาเวอร์ แพลนท์ จำกัด</div>
<div class="g" style="width:217px">บริษัท ไบโอ เพาเวอร์ แพลนท์ จำกัด</div>
<div class="t e" style="width:107px">024554900078</div>
<div class="g" style="width:167px">ผลิตไฟฟ้าโดยใช้แสงอาทิตย์</div>
<div class="t" style="width:56px">โฉนดที่ดิน</div>
<div class="g e" style="width:56px">7</div>
<div class="t" style="width:66px">-</div>
<div class="g" style="width:66px">-</div>
<div class="t" style="width:66px">ทุ่งสง</div>
<div class="g" style="width:66px">นาบอน</div>
<div class="t" style="width:66px">นครศรีธรรมราช</div>
<div class="g ac e" style="width:77px">80220</div>
<div class="t" style="width:106px"></div>
<div class="g ac e" style="width:76px">08801</div>
<div class="t ar" style="width:106px">23,443,600</div>
<div class="g ac" style="width:67px">4</div>
<div class="t ac" style="width:56px">2090</div>
<div class="g ac e" style="width:56px">35101</div>
<div class="t" style="width:106px">15 พ.ค. 2568</div>
<div class="g" style="width:106px">9 ม.ค. 2569</div>
<div class="t ar" style="width:96px">3,500,000</div>
<div class="g ar" style="width:96px">1,538,900</div>
<div class="t ar" style="width:96px">17,485,500</div>
<div class="g ar" style="width:96px">919,200</div>
<div class="t nb" style="width:97px">3-88(1)-27/68</div>
</div>
<div class="r">
<div class="g e" style="width:107px">408000831256</div>
<div class="t" style="width:217px">บริษัท ไบโอ เพาเวอร์ แพลนท์ จำกัด</div>
<div class="g" style="width:217px">บริษัท ไบโอ เพาเวอร์ แพลนท์ จำกัด</div>
<div class="t e" style="width:107px">024554900078</div>
<div class="g" style="width:167px">ผลิตไฟฟ้าโดยใช้แสงอาทิตย์</div>
<div class="t e" style="width:56px">180</div>
<div class="g e" style="width:56px">7</div>
<div class="t" style="width:66px">-</div>
<div class="g" style="width:66px">-</div>
<div class="t" style="width:66px">ทุ่งสง</div>
<div class="g" style="width:66px">นาบอน</div>
<div class="t" style="width:66px">นครศรีธรรมราช</div>
<div class="g ac e" style="width:77px">80220</div>
<div class="t" style="width:106px"></div>
<div class="g ac e" style="width:76px">08801</div>
<div class="t ar" style="width:106px">187,636,900</div>
<div class="g ac" style="width:67px">4</div>
<div class="t ac" style="width:56px">17314</div>
<div class="g ac e" style="width:56px">35101</div>
<div class="t" style="width:106px">15 พ.ค. 2568</div>
<div class="g" style="width:106px">9 ม.ค. 2569</div>
<div class="t ar" style="width:96px">23,101,200</div>
<div class="g ar" style="width:96px">12,696,100</div>
<div class="t hs ac" style="width:96px">#######</div>
<div class="g ar" style="width:96px">7,584,000</div>
<div class="t nb" style="width:97px">3-88(1)-28/68</div>
</div>
<div class="r">
<div class="g e" style="width:107px">206000481256</div>
<div class="t" style="width:217px">บริษัท อินฟินิต คอนสตรัคชั่น จำกัด</div>
<div class="g" style="width:217px">บริษัท อินฟินิต คอนสตรัคชั่น จำกัด</div>
<div class="t e" style="width:107px">016555900093</div>
<div class="g" style="width:167px">ตัด พับ ม้วน กลึง เจาะ คว้าน</div>
<div class="t" style="width:56px">โฉนดที่ดิน</div>
<div class="g e" style="width:56px">4</div>
<div class="t" style="width:66px"></div>
<div class="g" style="width:66px"></div>
<div class="t" style="width:66px">หนองโพ</div>
<div class="g" style="width:66px">ตาคลี</div>
<div class="t" style="width:66px">นครสวรรค์</div>
<div class="g ac e" style="width:77px">60140</div>
<div class="t" style="width:106px">084-0839998</div>
<div class="g ac e" style="width:76px">06412</div>
<div class="t ar" style="width:106px">25,500,000</div>
<div class="g ac" style="width:67px">23</div>
<div class="t ac" style="width:56px">492.4</div>
<div class="g ac e" style="width:56px">25910</div>
<div class="t" style="width:106px">11 มี.ค. 2568</div>
<div class="g" style="width:106px">9 ม.ค. 2569</div>
<div class="t ar" style="width:96px">4,500,000</div>
<div class="g ar" style="width:96px">6,000,000</div>
<div class="t ar" style="width:96px">10,000,000</div>
<div class="g ar" style="width:96px">5,000,000</div>
<div class="t nb" style="width:97px">จ3-64(12)-5/68</div>
</div>
<div class="r">
<div class="g e" style="width:107px">201201961256</div>
<div class="t" style="width:217px">-</div>
<div class="g" style="width:217px"></div>
<div class="t" style="width:107px"></div>
<div class="g" style="width:167px">ผลิตเครื่องมือ, เครื่องใช้พลาสติก</div>
<div class="t e" style="width:56px">88</div>
<div class="g e" style="width:56px">1</div>
<div class="t" style="width:66px"></div>
<div class="g" style="width:66px"></div>
<div class="t" style="width:66px">บ้านใหม่</div>
<div class="g" style="width:66px">บางใหญ่</div>
<div class="t" style="width:66px">นนทบุรี</div>
<div class="g ac e" style="width:77px">11140</div>
<div class="t" style="width:106px"></div>
<div class="g ac e" style="width:76px">05301</div>
<div class="t ar" style="width:106px">15,440,000</div>
<div class="g ac" style="width:67px">12</div>
<div class="t ac" style="width:56px">378.7</div>
<div class="g ac e" style="width:56px">22299</div>
<div class="t" style="width:106px">11 พ.ย. 2565</div>
<div class="g" style="width:106px">12 ม.ค. 2569</div>
<div class="t ar" style="width:96px">2,240,000</div>
<div class="g ar" style="width:96px">4,700,000</div>
<div class="t ar" style="width:96px">6,500,000</div>
<div class="g ar" style="width:96px">2,000,000</div>
<div class="t nb" style="width:97px">จ3-53(1)-31/65</div>
</div>
<div class="r">
<div class="g e" style="width:107px">205501983256</div>
<div class="t" style="width:217px">ส.เมืองจัง</div>
<div class="g" style="width:217px"></div>
<div class="t" style="width:107px"></div>
<div class="g" style="width:167px">ทำยางเครป</div>
<div class="t e" style="width:56px">285</div>
<div class="g e" style="width:56px">10</div>
<div class="t" style="width:66px">-</div>
<div class="g" style="width:66px">-</div>
<div class="t" style="width:66px">เมืองจัง</div>
<div class="g" style="width:66px">ภูเพียง</div>
<div class="t" style="width:66px">น่าน</div>
<div class="g ac e" style="width:77px">55000</div>
<div class="t" style="width:106px"></div>
<div class="g ac e" style="width:76px">05203</div>
<div class="t ar" style="width:106px">11,300,000</div>
<div class="g ac" style="width:67px">5</div>
<div class="t ac" style="width:56px">450</div>
<div class="g ac e" style="width:56px">22191</div>
<div class="t" style="width:106px">16 พ.ย. 2565</div>
<div class="g" style="width:106px">30 ม.ค. 2569</div>
<div class="t ar" style="width:96px">0</div>
<div class="g ar" style="width:96px">300,000</div>
<div class="t ar" style="width:96px">1,000,000</div>
<div class="g ar" style="width:96px">10,000,000</div>
<div class="t nb" style="width:97px">จ3-52(3)-7/65</div>
</div>
<div class="r">
<div class="g e" style="width:107px">201301258256</div>
<div class="t" style="width:217px">บริษัท ซีนอน อินเตอร์ จำกัด</div>
<div class="g" style="width:217px">บริษัท ซีนอน อินเตอร์ จำกัด</div>
<div class="t e" style="width:107px">010553811308</div>
<div class="g" style="width:167px">ผลิต เก็บรักษา แบ่งบรรจุ</div>
<div class="t" style="width:56px">118/49</div>
<div class="g e" style="width:56px">18</div>
<div class="t" style="width:66px">-</div>
<div class="g" style="width:66px">-</div>
<div class="t" style="width:66px">คลองหนึ่ง</div>
<div class="g" style="width:66px">คลองหลวง</div>
<div class="t" style="width:66px">ปทุมธานี</div>
<div class="g ac e" style="width:77px">12120</div>
<div class="t" style="width:106px"></div>
<div class="g ac e" style="width:76px">04201</div>
<div class="t ar" style="width:106px">101,670,000</div>
<div class="g ac" style="width:67px">16</div>
<div class="t ac" style="width:56px">209</div>
<div class="g ac e" style="width:56px">20299</div>
<div class="t" style="width:106px">1 ส.ค. 2568  เดิม</div>
<div class="g" style="width:106px">9 ม.ค. 2569</div>
<div class="t ar" style="width:96px">23,100,000</div>
<div class="g ar" style="width:96px">17,570,000</div>
<div class="t ar" style="width:96px">1,000,000</div>
<div class="g ar" style="width:96px">60,000,000</div>
<div class="t nb" style="width:97px">จ3-42(1)-11/68</div>
</div>
<div class="r">
<div class="g e" style="width:107px">201300037256</div>
<div class="t" style="width:217px">บริษัท ซัก อบ รีด จำกัด</div>
<div class="g" style="width:217px">บริษัท ซัก อบ รีด จำกัด</div>
<div class="t e" style="width:107px">013555100202</div>
<div class="g" style="width:167px">ซัก อบ รีด ผ้า หรือ เครื่องนุ่งห่ม</div>
<div class="t e" style="width:56px">1141</div>
<div class="g e" style="width:56px">13</div>
<div class="t" style="width:66px">-</div>
<div class="g" style="width:66px">-</div>
<div class="t" style="width:66px">คลองหนึ่ง</div>
<div class="g" style="width:66px">คลองหลวง</div>
<div class="t" style="width:66px">ปทุมธานี</div>
<div class="g ac e" style="width:77px">12120</div>
<div class="t" style="width:106px"></div>
<div class="g ac e" style="width:76px">09800</div>
<div class="t ar" style="width:106px">7,005,260</div>
<div class="g ac" style="width:67px">11</div>
<div class="t ac" style="width:56px">88.79</div>
<div class="g ac e" style="width:56px">28269</div>
<div class="t" style="width:106px">10 ม.ค. 2565</div>
<div class="g" style="width:106px">23 ม.ค. 2569</div>
<div class="t ar" style="width:96px">0</div>
<div class="g ar" style="width:96px">505,260</div>
<div class="t ar" style="width:96px">3,500,000</div>
<div class="g ar" style="width:96px">3,000,000</div>
<div class="t nb" style="width:97px">จ3-98-1/65ปท</div>
</div>
<div class="r">
<div class="g e" style="width:107px">101301887256</div>
<div class="t" style="width:217px">ห้างหุ้นส่วนจำกัด อนันตร์ทรัพย์ รีไซเคิล</div>
<div class="g" style="width:217px">ห้างหุ้นส่วนจำกัด อนันตร์ทรัพย์ รีไซเคิล</div>
<div class="t e" style="width:107px">013355700138</div>
<div class="g" style="width:167px">คัดแยกวัสดุที่ไม่ใช้แล้วที่ไม่เป็นของเสียอันตราย</div>
<div class="t" style="width:56px">53/7</div>
<div class="g e" style="width:56px">2</div>
<div class="t" style="width:66px"></div>
<div class="g" style="width:66px"></div>
<div class="t" style="width:66px">บ้านงิ้ว</div>
<div class="g" style="width:66px">สามโคก</div>
<div class="t" style="width:66px">ปทุมธานี</div>
<div class="g ac e" style="width:77px">12160</div>
<div class="t" style="width:106px"></div>
<div class="g ac e" style="width:76px">10500</div>
<div class="t ar" style="width:106px">9,000,000</div>
<div class="g ac" style="width:67px">10</div>
<div class="t ac" style="width:56px">310.7</div>
<div class="g ac e" style="width:56px">38219</div>
<div class="t" style="width:106px">24 ต.ค. 2568</div>
<div class="g" style="width:106px">2 ม.ค. 2569</div>
<div class="t ar" style="width:96px">4,000,000</div>
<div class="g ar" style="width:96px">2,000,000</div>
<div class="t ar" style="width:96px">2,000,000</div>
<div class="g ar" style="width:96px">1,000,000</div>
<div class="t nb" style="width:97px">3-105-69/68ปท</div>
</div>
</div>
<div class="abs" id="selbox"></div>
<div class="abs" id="selhandle"></div>
<!-- vertical scrollbar -->
<div class="abs" style="left:2536px;top:268px;width:22px;height:1046px;background:#f5f5f5;border-radius:11px"></div>
<svg style="left:2542px;top:276px" width="11" height="7" viewBox="0 0 11 7"><path d="M5.5 0.5Q6.2 0.5 7 1.4L10.6 6.5H0.4L4 1.4Q4.8 0.5 5.5 0.5Z" fill="#777"/></svg>
<div class="abs" style="left:2542px;top:290px;width:11px;height:394px;background:#737373;border-radius:6px"></div>
<svg style="left:2542px;top:1301px" width="11" height="7" viewBox="0 0 11 7"><path d="M5.5 6.5Q6.2 6.5 7 5.6L10.6 0.5H0.4L4 5.6Q4.8 6.5 5.5 6.5Z" fill="#777"/></svg>
<!-- ======= SHEET TABS ======= -->
<svg style="left:32px;top:1325px" width="9" height="15" viewBox="0 0 9 15"><path d="M8 0.7L1.2 7.5L8 14.3" fill="none" stroke="#b4b4b4" stroke-width="1.3"/></svg>
<svg style="left:72px;top:1325px" width="9" height="15" viewBox="0 0 9 15"><path d="M1 0.7L7.8 7.5L1 14.3" fill="none" stroke="#b4b4b4" stroke-width="1.3"/></svg>
<div class="abs" id="sheettab"></div>
<div class="tx" style="left:151.5px;top:1323px;font-size:17.5px;line-height:24px;color:#1e1e1e;-webkit-text-stroke:0.35px #1e1e1e"><span style="font-size:14.2px">ม.ค.</span>2569</div>
<div class="abs" style="left:152px;top:1343px;width:63px;height:2px;background:#107c41"></div>
<div class="vsep" style="left:230px;top:1321px;height:24px;background:#c8c8c8"></div>
<svg style="left:285px;top:1326px" width="13" height="13" viewBox="0 0 13 13"><path d="M6.5 0V13M0 6.5H13" stroke="#555" stroke-width="1.3"/></svg>
<!-- horizontal scrollbar -->
<svg style="left:1537px;top:1327px" width="4" height="14" viewBox="0 0 4 14"><circle cx="2" cy="2" r="1.1" fill="#b4b4b4"/><circle cx="2" cy="7" r="1.1" fill="#b4b4b4"/><circle cx="2" cy="12" r="1.1" fill="#b4b4b4"/></svg>
<div class="abs" style="left:1560px;top:1323px;width:977px;height:21px;background:#f5f5f5;border-radius:11px"></div>
<svg style="left:1566px;top:1328px" width="8" height="11" viewBox="0 0 8 11"><path d="M0.5 5.5Q0.5 4.8 1.4 4L7.5 0.4V10.6L1.4 7Q0.5 6.2 0.5 5.5Z" fill="#737373"/></svg>
<div class="abs" style="left:1581px;top:1328px;width:899px;height:11px;background:#737373;border-radius:6px"></div>
<svg style="left:2523px;top:1328px" width="8" height="11" viewBox="0 0 8 11"><path d="M7.5 5.5Q7.5 4.8 6.6 4L0.5 0.4V10.6L6.6 7Q7.5 6.2 7.5 5.5Z" fill="#737373"/></svg>
<!-- ======= STATUS BAR ======= -->
<div class="abs" id="status"></div>
<div class="tx" style="left:9px;top:1357px;font-size:12px;color:#333">พร้อม</div>
<div class="abs" style="left:2188px;top:1353px;width:50px;height:27px;background:#dedede"></div>
<svg style="left:2204px;top:1358px" width="17" height="17" viewBox="0 0 17 17"><path d="M1 1H16V16H1ZM1 6H16M1 11H16M6 1V16M11 1V16" fill="none" stroke="#3b3b3b" stroke-width="1.5"/></svg>
<svg style="left:2254px;top:1358px" width="18" height="17" viewBox="0 0 18 17"><rect x="0.8" y="0.8" width="16.4" height="15.4" fill="none" stroke="#3b3b3b" stroke-width="1.5"/><rect x="4.5" y="4" width="9" height="9" fill="none" stroke="#3b3b3b" stroke-width="1.3"/><path d="M6.5 7H11.5M6.5 10H11.5" stroke="#3b3b3b" stroke-width="1.2"/></svg>
<svg style="left:2304px;top:1358px" width="18" height="17" viewBox="0 0 18 17"><rect x="0.8" y="0.8" width="16.4" height="15.4" fill="none" stroke="#3b3b3b" stroke-width="1.5"/><path d="M1 9.5H11.5V1M6.5 1V9.5" fill="none" stroke="#3b3b3b" stroke-width="1.4"/></svg>
<div class="abs" style="left:2345px;top:1366px;width:10px;height:1.4px;background:#444"></div>
<div class="abs" style="left:2361px;top:1366px;width:125px;height:1px;background:#b9b9b9"></div>
<div class="abs" style="left:2421px;top:1360px;width:6px;height:14px;background:#555;border-radius:1px"></div>
<svg style="left:2492px;top:1361px" width="11" height="11" viewBox="0 0 11 11"><path d="M5.5 0V11M0 5.5H11" stroke="#444" stroke-width="1.3"/></svg>
<div class="tx" style="left:2519.5px;top:1357px;font-size:12.2px;color:#333">100%</div>
</body>
</html>
